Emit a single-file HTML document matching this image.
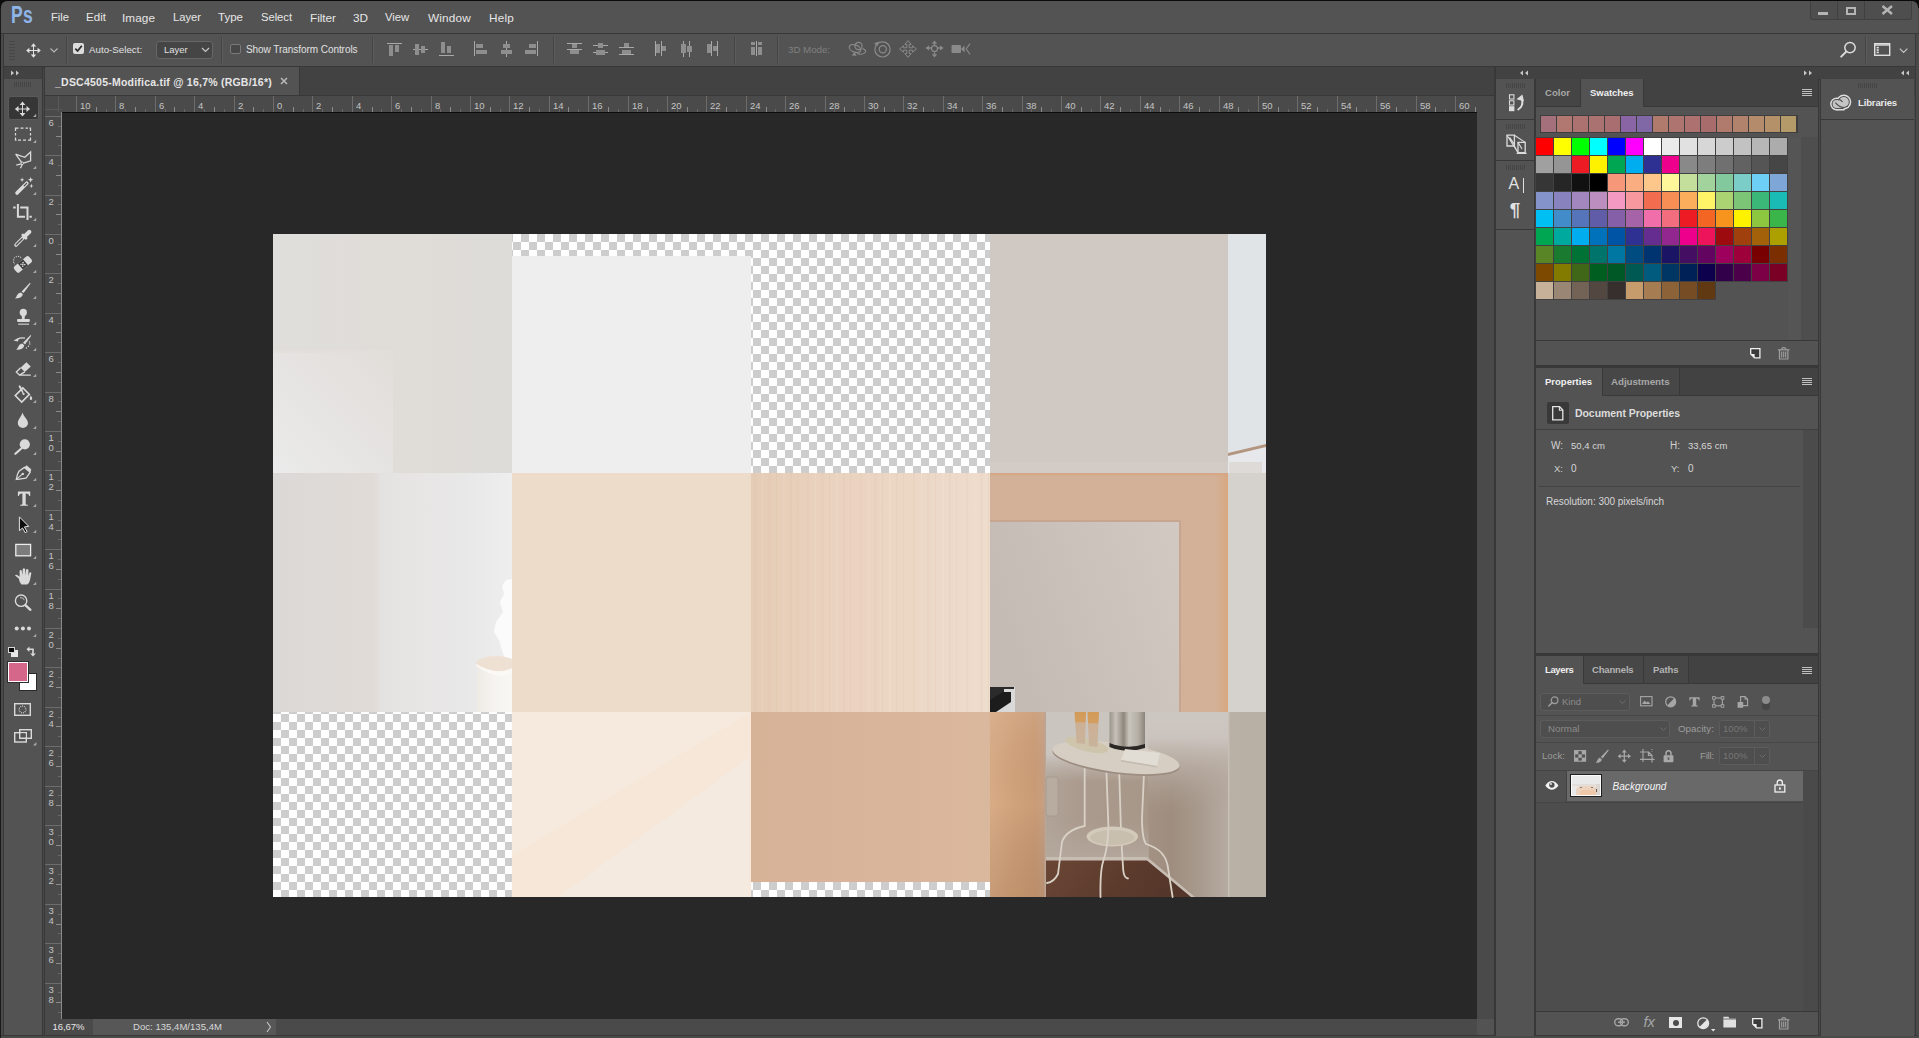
<!DOCTYPE html>
<html><head><meta charset="utf-8"><title>Photoshop</title>
<style>
html,body{margin:0;padding:0;background:#535353;}
body{width:1919px;height:1038px;position:relative;overflow:hidden;font-family:"Liberation Sans",sans-serif;}
body div,body span,body svg{position:absolute;display:block;white-space:nowrap;}
svg{overflow:visible}
</style></head><body>
<div style="left:0px;top:0px;width:1919px;height:1038px;background:#4a4a4a;"></div>
<div style="left:0px;top:0px;width:1919px;height:1px;background:#0a0a0a;"></div>
<div style="left:0px;top:0px;width:1px;height:1038px;background:#1a1a1a;"></div>
<div style="left:0px;top:0px;width:8px;height:8px;background:#0c0c0c;"></div>
<div style="left:1911px;top:0px;width:8px;height:8px;background:#0c0c0c;"></div>
<div style="left:1px;top:1px;width:1917px;height:32px;background:#535353;border-top-left-radius:6px;border-top-right-radius:6px;"></div>
<div style="left:1px;top:33px;width:1918px;height:1px;background:#383838;"></div>
<div style="left:4px;top:34px;width:1911px;height:32px;background:#535353;"></div>
<div style="left:3px;top:33px;width:1px;height:1003px;background:#383838;"></div>
<div style="left:1915px;top:33px;width:1px;height:1003px;background:#383838;"></div>
<div style="left:4px;top:66px;width:1911px;height:1px;background:#383838;"></div>
<div style="left:4px;top:67px;width:1911px;height:29px;background:#424242;"></div>
<div style="left:4px;top:79px;width:38px;height:957px;background:#535353;"></div>
<div style="left:4px;top:67px;width:38px;height:12px;background:#424242;"></div>
<div style="left:42px;top:67px;width:3px;height:969px;background:#383838;"></div>
<div style="left:43px;top:68px;width:1px;height:967px;background:#484848;"></div>
<div style="left:45px;top:67px;width:254px;height:28px;background:#535353;"></div>
<div style="left:299px;top:67px;width:1px;height:28px;background:#383838;"></div>
<div style="left:45px;top:95px;width:1449px;height:1px;background:#383838;"></div>
<div style="left:45px;top:96px;width:1449px;height:16px;background:#4a4a4a;"></div>
<div style="left:45px;top:112px;width:17px;height:907px;background:#4a4a4a;"></div>
<div style="left:62px;top:112px;width:1415px;height:1px;background:#0c0c0c;"></div>
<div style="left:61px;top:112px;width:1px;height:907px;background:#8a8a8a;"></div>
<div style="left:62px;top:113px;width:1415px;height:906px;background:#282828;"></div>
<div style="left:1477px;top:96px;width:17px;height:923px;background:#4a4a4a;"></div>
<div style="left:45px;top:1019px;width:1432px;height:16px;background:#4a4a4a;"></div>
<div style="left:1477px;top:1019px;width:17px;height:16px;background:#535353;"></div>
<div style="left:46px;top:1019px;width:47px;height:16px;background:#4a4a4a;"></div>
<div style="left:93px;top:1019px;width:183px;height:16px;background:#575757;"></div>
<div style="left:1px;top:1035px;width:1917px;height:1px;background:#383838;"></div>
<div style="left:1494px;top:67px;width:2px;height:969px;background:#383838;"></div>
<span style="left:51px;top:12.48px;font-size:11.25px;line-height:11.25px;color:#e6e6e6;letter-spacing:-0.032px;">File</span>
<span style="left:86px;top:12.27px;font-size:11.5px;line-height:11.5px;color:#e6e6e6;letter-spacing:0.046px;">Edit</span>
<span style="left:122px;top:12.05px;font-size:11.75px;line-height:11.75px;color:#e6e6e6;letter-spacing:0.068px;">Image</span>
<span style="left:173px;top:12.48px;font-size:11.25px;line-height:11.25px;color:#e6e6e6;letter-spacing:-0.029px;">Layer</span>
<span style="left:218px;top:12.27px;font-size:11.5px;line-height:11.5px;color:#e6e6e6;letter-spacing:0.017px;">Type</span>
<span style="left:261px;top:12.48px;font-size:11.25px;line-height:11.25px;color:#e6e6e6;letter-spacing:-0.045px;">Select</span>
<span style="left:310px;top:12.05px;font-size:11.75px;line-height:11.75px;color:#e6e6e6;letter-spacing:-0.019px;">Filter</span>
<span style="left:353px;top:12.05px;font-size:11.75px;line-height:11.75px;color:#e6e6e6;letter-spacing:-0.010px;">3D</span>
<span style="left:385px;top:12.48px;font-size:11.25px;line-height:11.25px;color:#e6e6e6;letter-spacing:-0.046px;">View</span>
<span style="left:428px;top:12.05px;font-size:11.75px;line-height:11.75px;color:#e6e6e6;letter-spacing:0.201px;">Window</span>
<span style="left:489px;top:12.05px;font-size:11.75px;line-height:11.75px;color:#e6e6e6;letter-spacing:0.208px;">Help</span>
<span style="left:10.5px;top:3.53px;font-size:23px;line-height:23px;color:#8fb5e8;font-weight:bold;transform:scaleX(0.76);transform-origin:0 0;letter-spacing:0.6px;">Ps</span>
<div style="left:1810px;top:1px;width:102px;height:19px;background:#4e4e4e;border:1px solid #404040;border-top:none;box-sizing:border-box;border-radius:0 0 3px 3px;"></div>
<div style="left:1837px;top:1px;width:1px;height:18px;background:#404040;"></div>
<div style="left:1864px;top:1px;width:1px;height:18px;background:#404040;"></div>
<div style="left:1818px;top:12px;width:10px;height:3px;background:#b4b4b4;"></div>
<div style="left:1846px;top:7px;width:10px;height:8px;background:none;border:2px solid #b4b4b4;box-sizing:border-box;"></div>
<svg style="left:1881px;top:5px;" width="13" height="10" viewBox="0 0 13 10"><path d="M1.5 1 L11 9 M11 1 L1.5 9" stroke="#b4b4b4" stroke-width="2.4" fill="none"/></svg>
<div style="left:9px;top:41px;width:6px;height:1px;background:#474747;"></div>
<div style="left:9px;top:44px;width:6px;height:1px;background:#474747;"></div>
<div style="left:9px;top:47px;width:6px;height:1px;background:#474747;"></div>
<div style="left:9px;top:50px;width:6px;height:1px;background:#474747;"></div>
<div style="left:9px;top:53px;width:6px;height:1px;background:#474747;"></div>
<div style="left:9px;top:56px;width:6px;height:1px;background:#474747;"></div>
<div style="left:9px;top:59px;width:6px;height:1px;background:#474747;"></div>
<div style="left:66px;top:37px;width:1px;height:26px;background:#444;"></div>
<div style="left:67px;top:37px;width:1px;height:26px;background:#5c5c5c;"></div>
<div style="left:221px;top:37px;width:1px;height:26px;background:#444;"></div>
<div style="left:222px;top:37px;width:1px;height:26px;background:#5c5c5c;"></div>
<div style="left:372px;top:37px;width:1px;height:26px;background:#444;"></div>
<div style="left:373px;top:37px;width:1px;height:26px;background:#5c5c5c;"></div>
<div style="left:553px;top:37px;width:1px;height:26px;background:#444;"></div>
<div style="left:554px;top:37px;width:1px;height:26px;background:#5c5c5c;"></div>
<div style="left:734px;top:37px;width:1px;height:26px;background:#444;"></div>
<div style="left:735px;top:37px;width:1px;height:26px;background:#5c5c5c;"></div>
<div style="left:777px;top:37px;width:1px;height:26px;background:#444;"></div>
<div style="left:778px;top:37px;width:1px;height:26px;background:#5c5c5c;"></div>
<div style="left:1865px;top:37px;width:1px;height:26px;background:#444;"></div>
<div style="left:1866px;top:37px;width:1px;height:26px;background:#5c5c5c;"></div>
<div style="left:73px;top:43px;width:11px;height:11px;background:#dcdcdc;border-radius:2px;"></div>
<svg style="left:73px;top:43px;" width="11" height="11" viewBox="0 0 11 11"><path d="M2.3 5.6 L4.6 8 L8.8 2.8" stroke="#2a2a2a" stroke-width="1.8" fill="none"/></svg>
<span style="left:89px;top:44.75px;font-size:9.75px;line-height:9.75px;color:#e0e0e0;">Auto-Select:</span>
<div style="left:156px;top:41px;width:57px;height:18px;background:#454545;border:1px solid #666;box-sizing:border-box;border-radius:3px;"></div>
<span style="left:164px;top:44.96px;font-size:9.5px;line-height:9.5px;color:#e0e0e0;letter-spacing:-0.053px;">Layer</span>
<svg style="left:201px;top:47px;" width="9" height="6" viewBox="0 0 9 6"><path d="M1 1 L4.5 4.5 L8 1" stroke="#c8c8c8" stroke-width="1.2" fill="none"/></svg>
<div style="left:230px;top:44px;width:11px;height:10px;background:#474747;border:1px solid #7a7a7a;box-sizing:border-box;border-radius:2px;"></div>
<span style="left:246px;top:44.53px;font-size:10.0px;line-height:10.0px;color:#e0e0e0;letter-spacing:-0.057px;">Show Transform Controls</span>
<span style="left:788px;top:44.75px;font-size:9.75px;line-height:9.75px;color:#808080;letter-spacing:-0.034px;">3D Mode:</span>
<span style="left:55px;top:77.11px;font-size:10.5px;line-height:10.5px;color:#e6e6e6;font-weight:bold;letter-spacing:0.229px;">_DSC4505-Modifica.tif @ 16,7% (RGB/16*)</span>
<svg style="left:280px;top:77px;" width="8" height="8" viewBox="0 0 8 8"><path d="M1 1 L7 7 M7 1 L1 7" stroke="#b8b8b8" stroke-width="1.6" fill="none"/></svg>
<span style="left:52.5px;top:1021.96px;font-size:9.5px;line-height:9.5px;color:#e6e6e6;letter-spacing:-0.037px;">16,67%</span>
<span style="left:133px;top:1021.96px;font-size:9.5px;line-height:9.5px;color:#d8d8d8;letter-spacing:0.045px;">Doc: 135,4M/135,4M</span>
<svg style="left:266px;top:1021px;" width="6" height="12" viewBox="0 0 6 12"><path d="M1 1 L4.5 6 L1 11" stroke="#c8c8c8" stroke-width="1.1" fill="none"/></svg>
<svg style="left:10px;top:69px;" width="12" height="8" viewBox="0 0 12 8"><path d="M1 1.5 L4 4 L1 6.5 Z M6 1.5 L9 4 L6 6.5 Z" fill="#c8c8c8"/></svg>
<div style="left:14px;top:82px;width:1px;height:5px;background:#454545;"></div>
<div style="left:16px;top:82px;width:1px;height:5px;background:#454545;"></div>
<div style="left:18px;top:82px;width:1px;height:5px;background:#454545;"></div>
<div style="left:20px;top:82px;width:1px;height:5px;background:#454545;"></div>
<div style="left:22px;top:82px;width:1px;height:5px;background:#454545;"></div>
<div style="left:24px;top:82px;width:1px;height:5px;background:#454545;"></div>
<div style="left:26px;top:82px;width:1px;height:5px;background:#454545;"></div>
<div style="left:28px;top:82px;width:1px;height:5px;background:#454545;"></div>
<div style="left:30px;top:82px;width:1px;height:5px;background:#454545;"></div>
<div style="left:76px;top:96px;width:1px;height:16px;background:#6c6c6c;"></div>
<span style="left:80px;top:100.96px;font-size:9.5px;line-height:9.5px;color:#c4c4c4;">10</span>
<div style="left:86px;top:109px;width:1px;height:3px;background:#686868;"></div>
<div style="left:96px;top:107px;width:1px;height:5px;background:#8a8a8a;"></div>
<div style="left:106px;top:109px;width:1px;height:3px;background:#686868;"></div>
<div style="left:115px;top:96px;width:1px;height:16px;background:#6c6c6c;"></div>
<span style="left:119px;top:100.96px;font-size:9.5px;line-height:9.5px;color:#c4c4c4;">8</span>
<div style="left:125px;top:109px;width:1px;height:3px;background:#686868;"></div>
<div style="left:135px;top:107px;width:1px;height:5px;background:#8a8a8a;"></div>
<div style="left:145px;top:109px;width:1px;height:3px;background:#686868;"></div>
<div style="left:155px;top:96px;width:1px;height:16px;background:#6c6c6c;"></div>
<span style="left:159px;top:100.96px;font-size:9.5px;line-height:9.5px;color:#c4c4c4;">6</span>
<div style="left:165px;top:109px;width:1px;height:3px;background:#686868;"></div>
<div style="left:174px;top:107px;width:1px;height:5px;background:#8a8a8a;"></div>
<div style="left:184px;top:109px;width:1px;height:3px;background:#686868;"></div>
<div style="left:194px;top:96px;width:1px;height:16px;background:#6c6c6c;"></div>
<span style="left:198px;top:100.96px;font-size:9.5px;line-height:9.5px;color:#c4c4c4;">4</span>
<div style="left:204px;top:109px;width:1px;height:3px;background:#686868;"></div>
<div style="left:214px;top:107px;width:1px;height:5px;background:#8a8a8a;"></div>
<div style="left:224px;top:109px;width:1px;height:3px;background:#686868;"></div>
<div style="left:234px;top:96px;width:1px;height:16px;background:#6c6c6c;"></div>
<span style="left:238px;top:100.96px;font-size:9.5px;line-height:9.5px;color:#c4c4c4;">2</span>
<div style="left:243px;top:109px;width:1px;height:3px;background:#686868;"></div>
<div style="left:253px;top:107px;width:1px;height:5px;background:#8a8a8a;"></div>
<div style="left:263px;top:109px;width:1px;height:3px;background:#686868;"></div>
<div style="left:273px;top:96px;width:1px;height:16px;background:#6c6c6c;"></div>
<span style="left:277px;top:100.96px;font-size:9.5px;line-height:9.5px;color:#c4c4c4;">0</span>
<div style="left:283px;top:109px;width:1px;height:3px;background:#686868;"></div>
<div style="left:293px;top:107px;width:1px;height:5px;background:#8a8a8a;"></div>
<div style="left:303px;top:109px;width:1px;height:3px;background:#686868;"></div>
<div style="left:312px;top:96px;width:1px;height:16px;background:#6c6c6c;"></div>
<span style="left:316px;top:100.96px;font-size:9.5px;line-height:9.5px;color:#c4c4c4;">2</span>
<div style="left:322px;top:109px;width:1px;height:3px;background:#686868;"></div>
<div style="left:332px;top:107px;width:1px;height:5px;background:#8a8a8a;"></div>
<div style="left:342px;top:109px;width:1px;height:3px;background:#686868;"></div>
<div style="left:352px;top:96px;width:1px;height:16px;background:#6c6c6c;"></div>
<span style="left:356px;top:100.96px;font-size:9.5px;line-height:9.5px;color:#c4c4c4;">4</span>
<div style="left:362px;top:109px;width:1px;height:3px;background:#686868;"></div>
<div style="left:372px;top:107px;width:1px;height:5px;background:#8a8a8a;"></div>
<div style="left:381px;top:109px;width:1px;height:3px;background:#686868;"></div>
<div style="left:391px;top:96px;width:1px;height:16px;background:#6c6c6c;"></div>
<span style="left:395px;top:100.96px;font-size:9.5px;line-height:9.5px;color:#c4c4c4;">6</span>
<div style="left:401px;top:109px;width:1px;height:3px;background:#686868;"></div>
<div style="left:411px;top:107px;width:1px;height:5px;background:#8a8a8a;"></div>
<div style="left:421px;top:109px;width:1px;height:3px;background:#686868;"></div>
<div style="left:431px;top:96px;width:1px;height:16px;background:#6c6c6c;"></div>
<span style="left:435px;top:100.96px;font-size:9.5px;line-height:9.5px;color:#c4c4c4;">8</span>
<div style="left:440px;top:109px;width:1px;height:3px;background:#686868;"></div>
<div style="left:450px;top:107px;width:1px;height:5px;background:#8a8a8a;"></div>
<div style="left:460px;top:109px;width:1px;height:3px;background:#686868;"></div>
<div style="left:470px;top:96px;width:1px;height:16px;background:#6c6c6c;"></div>
<span style="left:474px;top:100.96px;font-size:9.5px;line-height:9.5px;color:#c4c4c4;">10</span>
<div style="left:480px;top:109px;width:1px;height:3px;background:#686868;"></div>
<div style="left:490px;top:107px;width:1px;height:5px;background:#8a8a8a;"></div>
<div style="left:500px;top:109px;width:1px;height:3px;background:#686868;"></div>
<div style="left:509px;top:96px;width:1px;height:16px;background:#6c6c6c;"></div>
<span style="left:513px;top:100.96px;font-size:9.5px;line-height:9.5px;color:#c4c4c4;">12</span>
<div style="left:519px;top:109px;width:1px;height:3px;background:#686868;"></div>
<div style="left:529px;top:107px;width:1px;height:5px;background:#8a8a8a;"></div>
<div style="left:539px;top:109px;width:1px;height:3px;background:#686868;"></div>
<div style="left:549px;top:96px;width:1px;height:16px;background:#6c6c6c;"></div>
<span style="left:553px;top:100.96px;font-size:9.5px;line-height:9.5px;color:#c4c4c4;">14</span>
<div style="left:559px;top:109px;width:1px;height:3px;background:#686868;"></div>
<div style="left:568px;top:107px;width:1px;height:5px;background:#8a8a8a;"></div>
<div style="left:578px;top:109px;width:1px;height:3px;background:#686868;"></div>
<div style="left:588px;top:96px;width:1px;height:16px;background:#6c6c6c;"></div>
<span style="left:592px;top:100.96px;font-size:9.5px;line-height:9.5px;color:#c4c4c4;">16</span>
<div style="left:598px;top:109px;width:1px;height:3px;background:#686868;"></div>
<div style="left:608px;top:107px;width:1px;height:5px;background:#8a8a8a;"></div>
<div style="left:618px;top:109px;width:1px;height:3px;background:#686868;"></div>
<div style="left:628px;top:96px;width:1px;height:16px;background:#6c6c6c;"></div>
<span style="left:632px;top:100.96px;font-size:9.5px;line-height:9.5px;color:#c4c4c4;">18</span>
<div style="left:637px;top:109px;width:1px;height:3px;background:#686868;"></div>
<div style="left:647px;top:107px;width:1px;height:5px;background:#8a8a8a;"></div>
<div style="left:657px;top:109px;width:1px;height:3px;background:#686868;"></div>
<div style="left:667px;top:96px;width:1px;height:16px;background:#6c6c6c;"></div>
<span style="left:671px;top:100.96px;font-size:9.5px;line-height:9.5px;color:#c4c4c4;">20</span>
<div style="left:677px;top:109px;width:1px;height:3px;background:#686868;"></div>
<div style="left:687px;top:107px;width:1px;height:5px;background:#8a8a8a;"></div>
<div style="left:697px;top:109px;width:1px;height:3px;background:#686868;"></div>
<div style="left:706px;top:96px;width:1px;height:16px;background:#6c6c6c;"></div>
<span style="left:710px;top:100.96px;font-size:9.5px;line-height:9.5px;color:#c4c4c4;">22</span>
<div style="left:716px;top:109px;width:1px;height:3px;background:#686868;"></div>
<div style="left:726px;top:107px;width:1px;height:5px;background:#8a8a8a;"></div>
<div style="left:736px;top:109px;width:1px;height:3px;background:#686868;"></div>
<div style="left:746px;top:96px;width:1px;height:16px;background:#6c6c6c;"></div>
<span style="left:750px;top:100.96px;font-size:9.5px;line-height:9.5px;color:#c4c4c4;">24</span>
<div style="left:756px;top:109px;width:1px;height:3px;background:#686868;"></div>
<div style="left:766px;top:107px;width:1px;height:5px;background:#8a8a8a;"></div>
<div style="left:775px;top:109px;width:1px;height:3px;background:#686868;"></div>
<div style="left:785px;top:96px;width:1px;height:16px;background:#6c6c6c;"></div>
<span style="left:789px;top:100.96px;font-size:9.5px;line-height:9.5px;color:#c4c4c4;">26</span>
<div style="left:795px;top:109px;width:1px;height:3px;background:#686868;"></div>
<div style="left:805px;top:107px;width:1px;height:5px;background:#8a8a8a;"></div>
<div style="left:815px;top:109px;width:1px;height:3px;background:#686868;"></div>
<div style="left:825px;top:96px;width:1px;height:16px;background:#6c6c6c;"></div>
<span style="left:829px;top:100.96px;font-size:9.5px;line-height:9.5px;color:#c4c4c4;">28</span>
<div style="left:834px;top:109px;width:1px;height:3px;background:#686868;"></div>
<div style="left:844px;top:107px;width:1px;height:5px;background:#8a8a8a;"></div>
<div style="left:854px;top:109px;width:1px;height:3px;background:#686868;"></div>
<div style="left:864px;top:96px;width:1px;height:16px;background:#6c6c6c;"></div>
<span style="left:868px;top:100.96px;font-size:9.5px;line-height:9.5px;color:#c4c4c4;">30</span>
<div style="left:874px;top:109px;width:1px;height:3px;background:#686868;"></div>
<div style="left:884px;top:107px;width:1px;height:5px;background:#8a8a8a;"></div>
<div style="left:894px;top:109px;width:1px;height:3px;background:#686868;"></div>
<div style="left:903px;top:96px;width:1px;height:16px;background:#6c6c6c;"></div>
<span style="left:907px;top:100.96px;font-size:9.5px;line-height:9.5px;color:#c4c4c4;">32</span>
<div style="left:913px;top:109px;width:1px;height:3px;background:#686868;"></div>
<div style="left:923px;top:107px;width:1px;height:5px;background:#8a8a8a;"></div>
<div style="left:933px;top:109px;width:1px;height:3px;background:#686868;"></div>
<div style="left:943px;top:96px;width:1px;height:16px;background:#6c6c6c;"></div>
<span style="left:947px;top:100.96px;font-size:9.5px;line-height:9.5px;color:#c4c4c4;">34</span>
<div style="left:953px;top:109px;width:1px;height:3px;background:#686868;"></div>
<div style="left:962px;top:107px;width:1px;height:5px;background:#8a8a8a;"></div>
<div style="left:972px;top:109px;width:1px;height:3px;background:#686868;"></div>
<div style="left:982px;top:96px;width:1px;height:16px;background:#6c6c6c;"></div>
<span style="left:986px;top:100.96px;font-size:9.5px;line-height:9.5px;color:#c4c4c4;">36</span>
<div style="left:992px;top:109px;width:1px;height:3px;background:#686868;"></div>
<div style="left:1002px;top:107px;width:1px;height:5px;background:#8a8a8a;"></div>
<div style="left:1012px;top:109px;width:1px;height:3px;background:#686868;"></div>
<div style="left:1022px;top:96px;width:1px;height:16px;background:#6c6c6c;"></div>
<span style="left:1026px;top:100.96px;font-size:9.5px;line-height:9.5px;color:#c4c4c4;">38</span>
<div style="left:1031px;top:109px;width:1px;height:3px;background:#686868;"></div>
<div style="left:1041px;top:107px;width:1px;height:5px;background:#8a8a8a;"></div>
<div style="left:1051px;top:109px;width:1px;height:3px;background:#686868;"></div>
<div style="left:1061px;top:96px;width:1px;height:16px;background:#6c6c6c;"></div>
<span style="left:1065px;top:100.96px;font-size:9.5px;line-height:9.5px;color:#c4c4c4;">40</span>
<div style="left:1071px;top:109px;width:1px;height:3px;background:#686868;"></div>
<div style="left:1081px;top:107px;width:1px;height:5px;background:#8a8a8a;"></div>
<div style="left:1091px;top:109px;width:1px;height:3px;background:#686868;"></div>
<div style="left:1100px;top:96px;width:1px;height:16px;background:#6c6c6c;"></div>
<span style="left:1104px;top:100.96px;font-size:9.5px;line-height:9.5px;color:#c4c4c4;">42</span>
<div style="left:1110px;top:109px;width:1px;height:3px;background:#686868;"></div>
<div style="left:1120px;top:107px;width:1px;height:5px;background:#8a8a8a;"></div>
<div style="left:1130px;top:109px;width:1px;height:3px;background:#686868;"></div>
<div style="left:1140px;top:96px;width:1px;height:16px;background:#6c6c6c;"></div>
<span style="left:1144px;top:100.96px;font-size:9.5px;line-height:9.5px;color:#c4c4c4;">44</span>
<div style="left:1150px;top:109px;width:1px;height:3px;background:#686868;"></div>
<div style="left:1160px;top:107px;width:1px;height:5px;background:#8a8a8a;"></div>
<div style="left:1169px;top:109px;width:1px;height:3px;background:#686868;"></div>
<div style="left:1179px;top:96px;width:1px;height:16px;background:#6c6c6c;"></div>
<span style="left:1183px;top:100.96px;font-size:9.5px;line-height:9.5px;color:#c4c4c4;">46</span>
<div style="left:1189px;top:109px;width:1px;height:3px;background:#686868;"></div>
<div style="left:1199px;top:107px;width:1px;height:5px;background:#8a8a8a;"></div>
<div style="left:1209px;top:109px;width:1px;height:3px;background:#686868;"></div>
<div style="left:1219px;top:96px;width:1px;height:16px;background:#6c6c6c;"></div>
<span style="left:1223px;top:100.96px;font-size:9.5px;line-height:9.5px;color:#c4c4c4;">48</span>
<div style="left:1228px;top:109px;width:1px;height:3px;background:#686868;"></div>
<div style="left:1238px;top:107px;width:1px;height:5px;background:#8a8a8a;"></div>
<div style="left:1248px;top:109px;width:1px;height:3px;background:#686868;"></div>
<div style="left:1258px;top:96px;width:1px;height:16px;background:#6c6c6c;"></div>
<span style="left:1262px;top:100.96px;font-size:9.5px;line-height:9.5px;color:#c4c4c4;">50</span>
<div style="left:1268px;top:109px;width:1px;height:3px;background:#686868;"></div>
<div style="left:1278px;top:107px;width:1px;height:5px;background:#8a8a8a;"></div>
<div style="left:1288px;top:109px;width:1px;height:3px;background:#686868;"></div>
<div style="left:1297px;top:96px;width:1px;height:16px;background:#6c6c6c;"></div>
<span style="left:1301px;top:100.96px;font-size:9.5px;line-height:9.5px;color:#c4c4c4;">52</span>
<div style="left:1307px;top:109px;width:1px;height:3px;background:#686868;"></div>
<div style="left:1317px;top:107px;width:1px;height:5px;background:#8a8a8a;"></div>
<div style="left:1327px;top:109px;width:1px;height:3px;background:#686868;"></div>
<div style="left:1337px;top:96px;width:1px;height:16px;background:#6c6c6c;"></div>
<span style="left:1341px;top:100.96px;font-size:9.5px;line-height:9.5px;color:#c4c4c4;">54</span>
<div style="left:1347px;top:109px;width:1px;height:3px;background:#686868;"></div>
<div style="left:1356px;top:107px;width:1px;height:5px;background:#8a8a8a;"></div>
<div style="left:1366px;top:109px;width:1px;height:3px;background:#686868;"></div>
<div style="left:1376px;top:96px;width:1px;height:16px;background:#6c6c6c;"></div>
<span style="left:1380px;top:100.96px;font-size:9.5px;line-height:9.5px;color:#c4c4c4;">56</span>
<div style="left:1386px;top:109px;width:1px;height:3px;background:#686868;"></div>
<div style="left:1396px;top:107px;width:1px;height:5px;background:#8a8a8a;"></div>
<div style="left:1406px;top:109px;width:1px;height:3px;background:#686868;"></div>
<div style="left:1416px;top:96px;width:1px;height:16px;background:#6c6c6c;"></div>
<span style="left:1420px;top:100.96px;font-size:9.5px;line-height:9.5px;color:#c4c4c4;">58</span>
<div style="left:1425px;top:109px;width:1px;height:3px;background:#686868;"></div>
<div style="left:1435px;top:107px;width:1px;height:5px;background:#8a8a8a;"></div>
<div style="left:1445px;top:109px;width:1px;height:3px;background:#686868;"></div>
<div style="left:1455px;top:96px;width:1px;height:16px;background:#6c6c6c;"></div>
<span style="left:1459px;top:100.96px;font-size:9.5px;line-height:9.5px;color:#c4c4c4;">60</span>
<div style="left:1465px;top:109px;width:1px;height:3px;background:#686868;"></div>
<div style="left:1475px;top:107px;width:1px;height:5px;background:#8a8a8a;"></div>
<div style="left:45px;top:116px;width:16px;height:1px;background:#6c6c6c;"></div>
<span style="left:48.5px;top:118.46px;font-size:9.5px;line-height:9.5px;color:#c4c4c4;">6</span>
<div style="left:58px;top:126px;width:3px;height:1px;background:#686868;"></div>
<div style="left:56px;top:136px;width:5px;height:1px;background:#8a8a8a;"></div>
<div style="left:58px;top:145px;width:3px;height:1px;background:#686868;"></div>
<div style="left:45px;top:155px;width:16px;height:1px;background:#6c6c6c;"></div>
<span style="left:48.5px;top:157.46px;font-size:9.5px;line-height:9.5px;color:#c4c4c4;">4</span>
<div style="left:58px;top:165px;width:3px;height:1px;background:#686868;"></div>
<div style="left:56px;top:175px;width:5px;height:1px;background:#8a8a8a;"></div>
<div style="left:58px;top:185px;width:3px;height:1px;background:#686868;"></div>
<div style="left:45px;top:195px;width:16px;height:1px;background:#6c6c6c;"></div>
<span style="left:48.5px;top:197.46px;font-size:9.5px;line-height:9.5px;color:#c4c4c4;">2</span>
<div style="left:58px;top:204px;width:3px;height:1px;background:#686868;"></div>
<div style="left:56px;top:214px;width:5px;height:1px;background:#8a8a8a;"></div>
<div style="left:58px;top:224px;width:3px;height:1px;background:#686868;"></div>
<div style="left:45px;top:234px;width:16px;height:1px;background:#6c6c6c;"></div>
<span style="left:48.5px;top:236.46px;font-size:9.5px;line-height:9.5px;color:#c4c4c4;">0</span>
<div style="left:58px;top:244px;width:3px;height:1px;background:#686868;"></div>
<div style="left:56px;top:254px;width:5px;height:1px;background:#8a8a8a;"></div>
<div style="left:58px;top:264px;width:3px;height:1px;background:#686868;"></div>
<div style="left:45px;top:273px;width:16px;height:1px;background:#6c6c6c;"></div>
<span style="left:48.5px;top:275.46px;font-size:9.5px;line-height:9.5px;color:#c4c4c4;">2</span>
<div style="left:58px;top:283px;width:3px;height:1px;background:#686868;"></div>
<div style="left:56px;top:293px;width:5px;height:1px;background:#8a8a8a;"></div>
<div style="left:58px;top:303px;width:3px;height:1px;background:#686868;"></div>
<div style="left:45px;top:313px;width:16px;height:1px;background:#6c6c6c;"></div>
<span style="left:48.5px;top:315.46px;font-size:9.5px;line-height:9.5px;color:#c4c4c4;">4</span>
<div style="left:58px;top:323px;width:3px;height:1px;background:#686868;"></div>
<div style="left:56px;top:332px;width:5px;height:1px;background:#8a8a8a;"></div>
<div style="left:58px;top:342px;width:3px;height:1px;background:#686868;"></div>
<div style="left:45px;top:352px;width:16px;height:1px;background:#6c6c6c;"></div>
<span style="left:48.5px;top:354.46px;font-size:9.5px;line-height:9.5px;color:#c4c4c4;">6</span>
<div style="left:58px;top:362px;width:3px;height:1px;background:#686868;"></div>
<div style="left:56px;top:372px;width:5px;height:1px;background:#8a8a8a;"></div>
<div style="left:58px;top:382px;width:3px;height:1px;background:#686868;"></div>
<div style="left:45px;top:392px;width:16px;height:1px;background:#6c6c6c;"></div>
<span style="left:48.5px;top:394.46px;font-size:9.5px;line-height:9.5px;color:#c4c4c4;">8</span>
<div style="left:58px;top:401px;width:3px;height:1px;background:#686868;"></div>
<div style="left:56px;top:411px;width:5px;height:1px;background:#8a8a8a;"></div>
<div style="left:58px;top:421px;width:3px;height:1px;background:#686868;"></div>
<div style="left:45px;top:431px;width:16px;height:1px;background:#6c6c6c;"></div>
<span style="left:48.5px;top:433.46px;font-size:9.5px;line-height:9.5px;color:#c4c4c4;">1</span>
<span style="left:48.5px;top:443.46px;font-size:9.5px;line-height:9.5px;color:#c4c4c4;">0</span>
<div style="left:58px;top:441px;width:3px;height:1px;background:#686868;"></div>
<div style="left:56px;top:451px;width:5px;height:1px;background:#8a8a8a;"></div>
<div style="left:58px;top:461px;width:3px;height:1px;background:#686868;"></div>
<div style="left:45px;top:470px;width:16px;height:1px;background:#6c6c6c;"></div>
<span style="left:48.5px;top:472.46px;font-size:9.5px;line-height:9.5px;color:#c4c4c4;">1</span>
<span style="left:48.5px;top:482.46px;font-size:9.5px;line-height:9.5px;color:#c4c4c4;">2</span>
<div style="left:58px;top:480px;width:3px;height:1px;background:#686868;"></div>
<div style="left:56px;top:490px;width:5px;height:1px;background:#8a8a8a;"></div>
<div style="left:58px;top:500px;width:3px;height:1px;background:#686868;"></div>
<div style="left:45px;top:510px;width:16px;height:1px;background:#6c6c6c;"></div>
<span style="left:48.5px;top:512.46px;font-size:9.5px;line-height:9.5px;color:#c4c4c4;">1</span>
<span style="left:48.5px;top:522.46px;font-size:9.5px;line-height:9.5px;color:#c4c4c4;">4</span>
<div style="left:58px;top:520px;width:3px;height:1px;background:#686868;"></div>
<div style="left:56px;top:530px;width:5px;height:1px;background:#8a8a8a;"></div>
<div style="left:58px;top:539px;width:3px;height:1px;background:#686868;"></div>
<div style="left:45px;top:549px;width:16px;height:1px;background:#6c6c6c;"></div>
<span style="left:48.5px;top:551.46px;font-size:9.5px;line-height:9.5px;color:#c4c4c4;">1</span>
<span style="left:48.5px;top:561.46px;font-size:9.5px;line-height:9.5px;color:#c4c4c4;">6</span>
<div style="left:58px;top:559px;width:3px;height:1px;background:#686868;"></div>
<div style="left:56px;top:569px;width:5px;height:1px;background:#8a8a8a;"></div>
<div style="left:58px;top:579px;width:3px;height:1px;background:#686868;"></div>
<div style="left:45px;top:589px;width:16px;height:1px;background:#6c6c6c;"></div>
<span style="left:48.5px;top:591.46px;font-size:9.5px;line-height:9.5px;color:#c4c4c4;">1</span>
<span style="left:48.5px;top:601.46px;font-size:9.5px;line-height:9.5px;color:#c4c4c4;">8</span>
<div style="left:58px;top:598px;width:3px;height:1px;background:#686868;"></div>
<div style="left:56px;top:608px;width:5px;height:1px;background:#8a8a8a;"></div>
<div style="left:58px;top:618px;width:3px;height:1px;background:#686868;"></div>
<div style="left:45px;top:628px;width:16px;height:1px;background:#6c6c6c;"></div>
<span style="left:48.5px;top:630.46px;font-size:9.5px;line-height:9.5px;color:#c4c4c4;">2</span>
<span style="left:48.5px;top:640.46px;font-size:9.5px;line-height:9.5px;color:#c4c4c4;">0</span>
<div style="left:58px;top:638px;width:3px;height:1px;background:#686868;"></div>
<div style="left:56px;top:648px;width:5px;height:1px;background:#8a8a8a;"></div>
<div style="left:58px;top:658px;width:3px;height:1px;background:#686868;"></div>
<div style="left:45px;top:667px;width:16px;height:1px;background:#6c6c6c;"></div>
<span style="left:48.5px;top:669.46px;font-size:9.5px;line-height:9.5px;color:#c4c4c4;">2</span>
<span style="left:48.5px;top:679.46px;font-size:9.5px;line-height:9.5px;color:#c4c4c4;">2</span>
<div style="left:58px;top:677px;width:3px;height:1px;background:#686868;"></div>
<div style="left:56px;top:687px;width:5px;height:1px;background:#8a8a8a;"></div>
<div style="left:58px;top:697px;width:3px;height:1px;background:#686868;"></div>
<div style="left:45px;top:707px;width:16px;height:1px;background:#6c6c6c;"></div>
<span style="left:48.5px;top:709.46px;font-size:9.5px;line-height:9.5px;color:#c4c4c4;">2</span>
<span style="left:48.5px;top:719.46px;font-size:9.5px;line-height:9.5px;color:#c4c4c4;">4</span>
<div style="left:58px;top:717px;width:3px;height:1px;background:#686868;"></div>
<div style="left:56px;top:726px;width:5px;height:1px;background:#8a8a8a;"></div>
<div style="left:58px;top:736px;width:3px;height:1px;background:#686868;"></div>
<div style="left:45px;top:746px;width:16px;height:1px;background:#6c6c6c;"></div>
<span style="left:48.5px;top:748.46px;font-size:9.5px;line-height:9.5px;color:#c4c4c4;">2</span>
<span style="left:48.5px;top:758.46px;font-size:9.5px;line-height:9.5px;color:#c4c4c4;">6</span>
<div style="left:58px;top:756px;width:3px;height:1px;background:#686868;"></div>
<div style="left:56px;top:766px;width:5px;height:1px;background:#8a8a8a;"></div>
<div style="left:58px;top:776px;width:3px;height:1px;background:#686868;"></div>
<div style="left:45px;top:786px;width:16px;height:1px;background:#6c6c6c;"></div>
<span style="left:48.5px;top:788.46px;font-size:9.5px;line-height:9.5px;color:#c4c4c4;">2</span>
<span style="left:48.5px;top:798.46px;font-size:9.5px;line-height:9.5px;color:#c4c4c4;">8</span>
<div style="left:58px;top:795px;width:3px;height:1px;background:#686868;"></div>
<div style="left:56px;top:805px;width:5px;height:1px;background:#8a8a8a;"></div>
<div style="left:58px;top:815px;width:3px;height:1px;background:#686868;"></div>
<div style="left:45px;top:825px;width:16px;height:1px;background:#6c6c6c;"></div>
<span style="left:48.5px;top:827.46px;font-size:9.5px;line-height:9.5px;color:#c4c4c4;">3</span>
<span style="left:48.5px;top:837.46px;font-size:9.5px;line-height:9.5px;color:#c4c4c4;">0</span>
<div style="left:58px;top:835px;width:3px;height:1px;background:#686868;"></div>
<div style="left:56px;top:845px;width:5px;height:1px;background:#8a8a8a;"></div>
<div style="left:58px;top:855px;width:3px;height:1px;background:#686868;"></div>
<div style="left:45px;top:864px;width:16px;height:1px;background:#6c6c6c;"></div>
<span style="left:48.5px;top:866.46px;font-size:9.5px;line-height:9.5px;color:#c4c4c4;">3</span>
<span style="left:48.5px;top:876.46px;font-size:9.5px;line-height:9.5px;color:#c4c4c4;">2</span>
<div style="left:58px;top:874px;width:3px;height:1px;background:#686868;"></div>
<div style="left:56px;top:884px;width:5px;height:1px;background:#8a8a8a;"></div>
<div style="left:58px;top:894px;width:3px;height:1px;background:#686868;"></div>
<div style="left:45px;top:904px;width:16px;height:1px;background:#6c6c6c;"></div>
<span style="left:48.5px;top:906.46px;font-size:9.5px;line-height:9.5px;color:#c4c4c4;">3</span>
<span style="left:48.5px;top:916.46px;font-size:9.5px;line-height:9.5px;color:#c4c4c4;">4</span>
<div style="left:58px;top:914px;width:3px;height:1px;background:#686868;"></div>
<div style="left:56px;top:924px;width:5px;height:1px;background:#8a8a8a;"></div>
<div style="left:58px;top:933px;width:3px;height:1px;background:#686868;"></div>
<div style="left:45px;top:943px;width:16px;height:1px;background:#6c6c6c;"></div>
<span style="left:48.5px;top:945.46px;font-size:9.5px;line-height:9.5px;color:#c4c4c4;">3</span>
<span style="left:48.5px;top:955.46px;font-size:9.5px;line-height:9.5px;color:#c4c4c4;">6</span>
<div style="left:58px;top:953px;width:3px;height:1px;background:#686868;"></div>
<div style="left:56px;top:963px;width:5px;height:1px;background:#8a8a8a;"></div>
<div style="left:58px;top:973px;width:3px;height:1px;background:#686868;"></div>
<div style="left:45px;top:983px;width:16px;height:1px;background:#6c6c6c;"></div>
<span style="left:48.5px;top:985.46px;font-size:9.5px;line-height:9.5px;color:#c4c4c4;">3</span>
<span style="left:48.5px;top:995.46px;font-size:9.5px;line-height:9.5px;color:#c4c4c4;">8</span>
<div style="left:58px;top:992px;width:3px;height:1px;background:#686868;"></div>
<div style="left:56px;top:1002px;width:5px;height:1px;background:#8a8a8a;"></div>
<div style="left:58px;top:1012px;width:3px;height:1px;background:#686868;"></div>
<div style="left:45px;top:96px;width:17px;height:16px;background:#4a4a4a;"></div>
<div style="left:58px;top:96px;width:1px;height:16px;background:#585858;"></div>
<div style="left:45px;top:109px;width:17px;height:1px;background:#585858;"></div>
<svg style="left:273px;top:234px" width="993" height="663" viewBox="273 234 993 663"><defs>
<pattern id="chk" x="273" y="234" width="16" height="16" patternUnits="userSpaceOnUse"><rect width="16" height="16" fill="#fff"/><rect x="8" width="8" height="8" fill="#cdcdcd"/><rect y="8" width="8" height="8" fill="#cdcdcd"/></pattern>
<linearGradient id="g11" x1="0" y1="0" x2="1" y2="0"><stop offset="0" stop-color="#dfdedb"/><stop offset="0.55" stop-color="#e0dcd8"/><stop offset="1" stop-color="#dddcd8"/></linearGradient>
<linearGradient id="g11b" x1="1" y1="0" x2="0" y2="1"><stop offset="0" stop-color="#e1ddd9"/><stop offset="1" stop-color="#ebebeb"/></linearGradient>
<linearGradient id="g21" x1="0" y1="0" x2="1" y2="0"><stop offset="0" stop-color="#dbd9d6"/><stop offset="0.42" stop-color="#e1dbd7"/><stop offset="0.46" stop-color="#e5e3e2"/><stop offset="0.8" stop-color="#e9e8e8"/><stop offset="1" stop-color="#eeeeee"/></linearGradient>
<linearGradient id="g23" x1="0" y1="0" x2="1" y2="0"><stop offset="0" stop-color="#e5ccb6"/><stop offset="0.5" stop-color="#ebd5c2"/><stop offset="1" stop-color="#eedccd"/></linearGradient>
<pattern id="grain" x="751" y="473" width="53" height="239" patternUnits="userSpaceOnUse"><rect x="3" width="2" height="239" fill="#d9b79c" opacity=".13"/><rect x="11" width="1" height="239" fill="#fff" opacity=".10"/><rect x="17" width="3" height="239" fill="#d9b79c" opacity=".10"/><rect x="25" width="1" height="239" fill="#d2aa8c" opacity=".14"/><rect x="32" width="2" height="239" fill="#fff" opacity=".09"/><rect x="39" width="2" height="239" fill="#d9b79c" opacity=".12"/><rect x="46" width="1" height="239" fill="#d2aa8c" opacity=".10"/></pattern>
<linearGradient id="g24t" x1="0" y1="0" x2="0" y2="1"><stop offset="0" stop-color="#d6a684"/><stop offset="1" stop-color="#d6a684" stop-opacity="0"/></linearGradient>
<linearGradient id="g24r" x1="0" y1="0" x2="1" y2="0"><stop offset="0" stop-color="#d2b097" stop-opacity="0"/><stop offset="0.93" stop-color="#d4b097" stop-opacity="0"/><stop offset="1" stop-color="#daa67d"/></linearGradient>
<linearGradient id="g24i" x1="0" y1="0.35" x2="1" y2="0"><stop offset="0" stop-color="#c4bbb4"/><stop offset="0.5" stop-color="#cac2bb"/><stop offset="1" stop-color="#d1c9c2"/></linearGradient>
<linearGradient id="g32" x1="0" y1="1" x2="0.62" y2="0" gradientUnits="objectBoundingBox"><stop offset="0" stop-color="#f5e6d8"/><stop offset="1" stop-color="#f6e7da"/></linearGradient>
<linearGradient id="g33" x1="0" y1="0" x2="1" y2="0"><stop offset="0" stop-color="#d6b397"/><stop offset="0.4" stop-color="#d8b59a"/><stop offset="1" stop-color="#dab89d"/></linearGradient>
<linearGradient id="gcol" x1="0" y1="0" x2="1" y2="0"><stop offset="0" stop-color="#d8ac86"/><stop offset="0.4" stop-color="#d1a37c"/><stop offset="0.8" stop-color="#cb9c76"/><stop offset="0.95" stop-color="#c79f82"/><stop offset="1" stop-color="#bf9a82"/></linearGradient><linearGradient id="gcolv" x1="0" y1="0" x2="0" y2="1"><stop offset="0" stop-color="#ffffff" stop-opacity=".06"/><stop offset="0.5" stop-color="#000" stop-opacity="0"/><stop offset="1" stop-color="#5a3010" stop-opacity=".13"/></linearGradient>
<linearGradient id="gwall" x1="0" y1="0" x2="1" y2="0"><stop offset="0" stop-color="#b0a498"/><stop offset="0.3" stop-color="#ab9b8e"/><stop offset="1" stop-color="#a79789"/></linearGradient><linearGradient id="gwallr" x1="0" y1="0" x2="1" y2="0"><stop offset="0" stop-color="#a39284"/><stop offset="0.3" stop-color="#9f8e80"/><stop offset="0.65" stop-color="#a89a8d"/><stop offset="1" stop-color="#b7aca2"/></linearGradient><linearGradient id="gwtop" x1="0" y1="0" x2="0" y2="1"><stop offset="0" stop-color="#cbc5c0"/><stop offset="0.6" stop-color="#cbc5c0"/><stop offset="1" stop-color="#c2b9b1" stop-opacity="0"/></linearGradient><linearGradient id="gwtopr" x1="0" y1="0" x2="0" y2="1"><stop offset="0" stop-color="#cdc7c2"/><stop offset="0.25" stop-color="#cbc4be"/><stop offset="0.5" stop-color="#bcb1a8" stop-opacity=".85"/><stop offset="1" stop-color="#aa9c90" stop-opacity="0"/></linearGradient><linearGradient id="gfloor" x1="0" y1="0" x2="1" y2="0.2"><stop offset="0" stop-color="#6b4636"/><stop offset="0.6" stop-color="#5c3b2d"/><stop offset="1" stop-color="#54362a"/></linearGradient><linearGradient id="gwlow" x1="0" y1="0" x2="0" y2="1"><stop offset="0" stop-color="#b4a79c" stop-opacity="0"/><stop offset="1" stop-color="#b5a99e" stop-opacity=".8"/></linearGradient>
<linearGradient id="g35" x1="0" y1="0" x2="1" y2="0"><stop offset="0" stop-color="#b9b0a6"/><stop offset="1" stop-color="#b9b0a5"/></linearGradient>
<linearGradient id="gth" x1="0" y1="0" x2="1" y2="0"><stop offset="0" stop-color="#9a948b"/><stop offset="0.18" stop-color="#c6c1b9"/><stop offset="0.4" stop-color="#8e877e"/><stop offset="0.55" stop-color="#c9c4bc"/><stop offset="0.8" stop-color="#b5afa6"/><stop offset="1" stop-color="#8c857c"/></linearGradient>
<linearGradient id="gcup" x1="0" y1="0" x2="0" y2="1"><stop offset="0" stop-color="#d39b58"/><stop offset="0.3" stop-color="#d39e60"/><stop offset="0.34" stop-color="#ccb095"/><stop offset="1" stop-color="#c9b39c"/></linearGradient>
<linearGradient id="gcandle" x1="0" y1="0" x2="1" y2="0"><stop offset="0" stop-color="#eeebe6"/><stop offset="0.5" stop-color="#f6f4f0"/><stop offset="1" stop-color="#f8f7f4"/></linearGradient>
</defs><rect x="273" y="234" width="993" height="663" fill="url(#chk)"/><rect x="273" y="234" width="239" height="239" fill="url(#g11)"/><rect x="273" y="352" width="120" height="121" fill="url(#g11b)"/><rect x="273" y="350" width="120" height="3" fill="#e3dfdb" opacity=".8"/><rect x="512" y="256" width="239" height="217" fill="#eeeeee"/><rect x="990" y="234" width="238" height="239" fill="#d0c8c2"/><rect x="990" y="462" width="238" height="11" fill="#d3ccc6"/><rect x="1228" y="234" width="38" height="239" fill="#e1e4e7"/><polygon points="1228,456 1266,447 1266,473 1228,473" fill="#e7e8eb"/><polygon points="1228,453 1266,444 1266,447 1228,456" fill="#b39580"/><rect x="1229" y="462" width="33" height="11" fill="#dddad8"/><rect x="273" y="473" width="239" height="239" fill="url(#g21)"/><path d="M512 579 L506 580 L502 586 L504 594 L500 602 L503 612 L496 622 L494 632 L499 640 L502 650 L506 662 L512 664 Z" fill="#fbfbfb"/><rect x="477" y="664" width="35" height="48" fill="url(#gcandle)"/><ellipse cx="496" cy="664" rx="20" ry="8" fill="#efe0d4"/><path d="M476 666 Q496 680 512 674 L512 668 Q496 676 476 664 Z" fill="#faf9f6"/><rect x="512" y="473" width="239" height="239" fill="#eedccb"/><rect x="751" y="473" width="239" height="239" fill="url(#g23)"/><rect x="751" y="473" width="239" height="239" fill="url(#grain)"/><rect x="990" y="473" width="238" height="239" fill="#d2b198"/><rect x="990" y="473" width="238" height="239" fill="url(#g24r)"/><rect x="990" y="473" width="238" height="4" fill="url(#g24t)"/><rect x="990" y="520" width="191" height="192" fill="#c6a690"/><rect x="990" y="522" width="189" height="190" fill="url(#g24i)"/><rect x="990" y="687" width="25" height="25" fill="#d9d9d9"/><polygon points="990,687 1014,687 1014,689 1004,689 1004,697 990,712" fill="#2b2b2b"/><polygon points="990,712 990,700 1003,692 1011,692 1011,702 996,712" fill="#1c1c1c"/><rect x="1228" y="473" width="38" height="239" fill="#d5d1cd"/><rect x="512" y="712" width="239" height="185" fill="#f6e9dd"/><polygon points="512,856 751,712 751,756 558,897 512,897" fill="#f7e7d8"/><polygon points="558,897 751,756 751,897" fill="#f4eae0"/><rect x="749" y="712" width="2" height="185" fill="#f7e8db"/><rect x="751" y="712" width="239" height="170" fill="url(#g33)"/><rect x="1045" y="712" width="104" height="185" fill="url(#gwall)"/><rect x="1148" y="712" width="80" height="185" fill="url(#gwallr)"/><rect x="1045" y="712" width="104" height="70" fill="url(#gwtop)"/><rect x="1148" y="712" width="80" height="100" fill="url(#gwtopr)"/><rect x="1045" y="820" width="104" height="38" fill="url(#gwlow)"/><polygon points="1045,859 1147,859 1193,897 1045,897" fill="url(#gfloor)"/><polygon points="1045,857 1147,857 1195,897 1191,897 1147,860.5 1045,860.5" fill="#c8bdb2"/><rect x="990" y="712" width="56" height="185" fill="url(#gcol)"/><rect x="990" y="712" width="56" height="185" fill="url(#gcolv)"/><rect x="1044.5" y="712" width="1.5" height="185" fill="#bca594"/><rect x="1046" y="777" width="12" height="39" rx="2" fill="#b8aca1" stroke="#a89a8e" stroke-width="1"/><path d="M1084.7 766 L1084.7 826 Q1066 830 1062 842 L1058 874 Q1054 882 1047 883" stroke="#d9d1c6" stroke-width="1.8" fill="none" stroke-linecap="round"/><path d="M1119.2 772 L1121.2 838 L1123.2 870 Q1124 878 1128 878.5" stroke="#d9d1c6" stroke-width="1.8" fill="none" stroke-linecap="round"/><path d="M1144 773 L1142 818 Q1142 838 1146 844 Q1166 850 1168 868 L1172.6 897" stroke="#d9d1c6" stroke-width="1.8" fill="none" stroke-linecap="round"/><ellipse cx="1112.3" cy="836.5" rx="25.7" ry="9.9" fill="#d3cabb"/><ellipse cx="1112.3" cy="837.5" rx="22" ry="7.5" fill="#c9bfaf"/><path d="M1106.4 771 L1108.4 826 Q1108 848 1103 862 Q1100 872 1100.5 897" stroke="#d9d1c6" stroke-width="1.8" fill="none" stroke-linecap="round"/><ellipse cx="1116" cy="759.3" rx="64" ry="14.5" transform="rotate(7.5 1116 759.3)" fill="#9c8d80"/><ellipse cx="1116" cy="757.5" rx="64" ry="14.5" transform="rotate(7.5 1116 757.5)" fill="#d6cec3"/><ellipse cx="1087" cy="745" rx="22" ry="6.5" transform="rotate(14 1087 745)" fill="#cfc5ac"/><polygon points="1074.5,712 1086,712 1085,744 1076.5,743" fill="url(#gcup)"/><polygon points="1087.5,712 1099,712 1097.5,747 1089,746" fill="url(#gcup)"/><rect x="1109.5" y="712" width="35.5" height="35" fill="url(#gth)"/><path d="M1109.5 743 Q1127 750 1145 744 L1145 748 Q1127 754 1109.5 747 Z" fill="#2b2725"/><polygon points="1125,749 1160,753 1157,766 1121,760" fill="#e2ddd4"/><polygon points="1121,760 1157,766 1157,767.5 1121,761.5" fill="#c4bbb0"/><rect x="1228" y="712" width="38" height="185" fill="url(#g35)"/><rect x="1228" y="712" width="1.5" height="185" fill="#cfc6bd" opacity=".7"/></svg>
<div style="left:1496px;top:67px;width:38px;height:12px;background:#424242;"></div>
<div style="left:1496px;top:79px;width:38px;height:957px;background:#535353;"></div>
<div style="left:1534px;top:79px;width:2px;height:957px;background:#383838;"></div>
<div style="left:1496px;top:119px;width:38px;height:1px;background:#383838;"></div>
<div style="left:1496px;top:160px;width:38px;height:1px;background:#383838;"></div>
<div style="left:1496px;top:229px;width:38px;height:1px;background:#383838;"></div>
<div style="left:1506px;top:83px;width:1px;height:5px;background:#454545;"></div>
<div style="left:1508px;top:83px;width:1px;height:5px;background:#454545;"></div>
<div style="left:1510px;top:83px;width:1px;height:5px;background:#454545;"></div>
<div style="left:1512px;top:83px;width:1px;height:5px;background:#454545;"></div>
<div style="left:1514px;top:83px;width:1px;height:5px;background:#454545;"></div>
<div style="left:1516px;top:83px;width:1px;height:5px;background:#454545;"></div>
<div style="left:1518px;top:83px;width:1px;height:5px;background:#454545;"></div>
<div style="left:1520px;top:83px;width:1px;height:5px;background:#454545;"></div>
<div style="left:1522px;top:83px;width:1px;height:5px;background:#454545;"></div>
<div style="left:1524px;top:83px;width:1px;height:5px;background:#454545;"></div>
<div style="left:1506px;top:124px;width:1px;height:5px;background:#454545;"></div>
<div style="left:1508px;top:124px;width:1px;height:5px;background:#454545;"></div>
<div style="left:1510px;top:124px;width:1px;height:5px;background:#454545;"></div>
<div style="left:1512px;top:124px;width:1px;height:5px;background:#454545;"></div>
<div style="left:1514px;top:124px;width:1px;height:5px;background:#454545;"></div>
<div style="left:1516px;top:124px;width:1px;height:5px;background:#454545;"></div>
<div style="left:1518px;top:124px;width:1px;height:5px;background:#454545;"></div>
<div style="left:1520px;top:124px;width:1px;height:5px;background:#454545;"></div>
<div style="left:1522px;top:124px;width:1px;height:5px;background:#454545;"></div>
<div style="left:1524px;top:124px;width:1px;height:5px;background:#454545;"></div>
<div style="left:1506px;top:165px;width:1px;height:5px;background:#454545;"></div>
<div style="left:1508px;top:165px;width:1px;height:5px;background:#454545;"></div>
<div style="left:1510px;top:165px;width:1px;height:5px;background:#454545;"></div>
<div style="left:1512px;top:165px;width:1px;height:5px;background:#454545;"></div>
<div style="left:1514px;top:165px;width:1px;height:5px;background:#454545;"></div>
<div style="left:1516px;top:165px;width:1px;height:5px;background:#454545;"></div>
<div style="left:1518px;top:165px;width:1px;height:5px;background:#454545;"></div>
<div style="left:1520px;top:165px;width:1px;height:5px;background:#454545;"></div>
<div style="left:1522px;top:165px;width:1px;height:5px;background:#454545;"></div>
<div style="left:1524px;top:165px;width:1px;height:5px;background:#454545;"></div>
<svg style="left:1519px;top:69px;" width="12" height="8" viewBox="0 0 12 8"><path d="M4 1.5 L1 4 L4 6.5 Z M9 1.5 L6 4 L9 6.5 Z" fill="#c8c8c8"/></svg>
<div style="left:1536px;top:67px;width:282px;height:12px;background:#424242;"></div>
<svg style="left:1803px;top:69px;" width="12" height="8" viewBox="0 0 12 8"><path d="M1 1.5 L4 4 L1 6.5 Z M6 1.5 L9 4 L6 6.5 Z" fill="#c8c8c8"/></svg>
<div style="left:1818px;top:79px;width:3px;height:957px;background:#383838;"></div>
<div style="left:1819px;top:80px;width:1px;height:955px;background:#484848;"></div>
<div style="left:1821px;top:67px;width:93px;height:12px;background:#424242;"></div>
<div style="left:1821px;top:79px;width:93px;height:957px;background:#535353;"></div>
<div style="left:1821px;top:119px;width:93px;height:1px;background:#383838;"></div>
<svg style="left:1900px;top:69px;" width="12" height="8" viewBox="0 0 12 8"><path d="M4 1.5 L1 4 L4 6.5 Z M9 1.5 L6 4 L9 6.5 Z" fill="#c8c8c8"/></svg>
<div style="left:1858px;top:83px;width:1px;height:5px;background:#454545;"></div>
<div style="left:1860px;top:83px;width:1px;height:5px;background:#454545;"></div>
<div style="left:1862px;top:83px;width:1px;height:5px;background:#454545;"></div>
<div style="left:1864px;top:83px;width:1px;height:5px;background:#454545;"></div>
<div style="left:1866px;top:83px;width:1px;height:5px;background:#454545;"></div>
<div style="left:1868px;top:83px;width:1px;height:5px;background:#454545;"></div>
<div style="left:1870px;top:83px;width:1px;height:5px;background:#454545;"></div>
<div style="left:1872px;top:83px;width:1px;height:5px;background:#454545;"></div>
<div style="left:1874px;top:83px;width:1px;height:5px;background:#454545;"></div>
<div style="left:1876px;top:83px;width:1px;height:5px;background:#454545;"></div>
<span style="left:1858px;top:97.96px;font-size:9.5px;line-height:9.5px;color:#e8e8e8;font-weight:bold;letter-spacing:-0.125px;">Libraries</span>
<div style="left:1536px;top:79px;width:282px;height:28px;background:#424242;"></div>
<div style="left:1536px;top:107px;width:282px;height:258px;background:#535353;"></div>
<div style="left:1536px;top:79px;width:44px;height:27px;background:#454545;"></div>
<div style="left:1580px;top:79px;width:1px;height:27px;background:#383838;"></div>
<div style="left:1581px;top:79px;width:62px;height:28px;background:#535353;"></div>
<div style="left:1643px;top:79px;width:1px;height:27px;background:#383838;"></div>
<div style="left:1536px;top:106px;width:45px;height:1px;background:#383838;"></div>
<div style="left:1644px;top:106px;width:174px;height:1px;background:#383838;"></div>
<span style="left:1545px;top:87.96px;font-size:9.5px;line-height:9.5px;color:#a8a8a8;font-weight:bold;letter-spacing:0.039px;">Color</span>
<span style="left:1590px;top:87.96px;font-size:9.5px;line-height:9.5px;color:#f0f0f0;font-weight:bold;letter-spacing:-0.041px;">Swatches</span>
<div style="left:1802px;top:89px;width:10px;height:1px;background:#c0c0c0;"></div>
<div style="left:1802px;top:91px;width:10px;height:1px;background:#c0c0c0;"></div>
<div style="left:1802px;top:93px;width:10px;height:1px;background:#c0c0c0;"></div>
<div style="left:1802px;top:95px;width:10px;height:1px;background:#c0c0c0;"></div>
<div style="left:1540px;top:115px;width:258px;height:18px;background:#3e3e3e;"></div>
<div style="left:1541px;top:116px;width:15px;height:16px;background:#a3707c;"></div>
<div style="left:1557px;top:116px;width:15px;height:16px;background:#b07870;"></div>
<div style="left:1573px;top:116px;width:15px;height:16px;background:#ac726f;"></div>
<div style="left:1589px;top:116px;width:15px;height:16px;background:#ab7272;"></div>
<div style="left:1605px;top:116px;width:15px;height:16px;background:#a96e70;"></div>
<div style="left:1621px;top:116px;width:15px;height:16px;background:#8a65a6;"></div>
<div style="left:1637px;top:116px;width:15px;height:16px;background:#8068a6;"></div>
<div style="left:1653px;top:116px;width:15px;height:16px;background:#b07a6c;"></div>
<div style="left:1669px;top:116px;width:15px;height:16px;background:#ae7570;"></div>
<div style="left:1685px;top:116px;width:15px;height:16px;background:#ad716f;"></div>
<div style="left:1701px;top:116px;width:15px;height:16px;background:#a86c6c;"></div>
<div style="left:1717px;top:116px;width:15px;height:16px;background:#b07b6d;"></div>
<div style="left:1733px;top:116px;width:15px;height:16px;background:#b2836c;"></div>
<div style="left:1749px;top:116px;width:15px;height:16px;background:#b58c6b;"></div>
<div style="left:1765px;top:116px;width:15px;height:16px;background:#b5916a;"></div>
<div style="left:1781px;top:116px;width:15px;height:16px;background:#b49a69;"></div>
<div style="left:1801px;top:137px;width:17px;height:203px;background:#4e4e4e;"></div>
<div style="left:1788px;top:137px;width:13px;height:203px;background:#555555;"></div>
<div style="left:1535px;top:137px;width:253px;height:19px;background:#414141;"></div>
<div style="left:1535px;top:155px;width:253px;height:19px;background:#414141;"></div>
<div style="left:1535px;top:173px;width:253px;height:19px;background:#414141;"></div>
<div style="left:1535px;top:191px;width:253px;height:19px;background:#414141;"></div>
<div style="left:1535px;top:209px;width:253px;height:19px;background:#414141;"></div>
<div style="left:1535px;top:227px;width:253px;height:19px;background:#414141;"></div>
<div style="left:1535px;top:245px;width:253px;height:19px;background:#414141;"></div>
<div style="left:1535px;top:263px;width:253px;height:19px;background:#414141;"></div>
<div style="left:1535px;top:281px;width:181px;height:19px;background:#414141;"></div>
<div style="left:1536px;top:138px;width:17px;height:17px;background:#ff0000;"></div>
<div style="left:1554px;top:138px;width:17px;height:17px;background:#ffff00;"></div>
<div style="left:1572px;top:138px;width:17px;height:17px;background:#00ff00;"></div>
<div style="left:1590px;top:138px;width:17px;height:17px;background:#00ffff;"></div>
<div style="left:1608px;top:138px;width:17px;height:17px;background:#0000ff;"></div>
<div style="left:1626px;top:138px;width:17px;height:17px;background:#ff00ff;"></div>
<div style="left:1644px;top:138px;width:17px;height:17px;background:#ffffff;"></div>
<div style="left:1662px;top:138px;width:17px;height:17px;background:#ebebeb;"></div>
<div style="left:1680px;top:138px;width:17px;height:17px;background:#e1e1e1;"></div>
<div style="left:1698px;top:138px;width:17px;height:17px;background:#d7d7d7;"></div>
<div style="left:1716px;top:138px;width:17px;height:17px;background:#cccccc;"></div>
<div style="left:1734px;top:138px;width:17px;height:17px;background:#c2c2c2;"></div>
<div style="left:1752px;top:138px;width:17px;height:17px;background:#b7b7b7;"></div>
<div style="left:1770px;top:138px;width:17px;height:17px;background:#acacac;"></div>
<div style="left:1536px;top:156px;width:17px;height:17px;background:#a0a0a0;"></div>
<div style="left:1554px;top:156px;width:17px;height:17px;background:#959595;"></div>
<div style="left:1572px;top:156px;width:17px;height:17px;background:#ed1c24;"></div>
<div style="left:1590px;top:156px;width:17px;height:17px;background:#fff200;"></div>
<div style="left:1608px;top:156px;width:17px;height:17px;background:#00a651;"></div>
<div style="left:1626px;top:156px;width:17px;height:17px;background:#00aeef;"></div>
<div style="left:1644px;top:156px;width:17px;height:17px;background:#2e3192;"></div>
<div style="left:1662px;top:156px;width:17px;height:17px;background:#ec008c;"></div>
<div style="left:1680px;top:156px;width:17px;height:17px;background:#898989;"></div>
<div style="left:1698px;top:156px;width:17px;height:17px;background:#7d7d7d;"></div>
<div style="left:1716px;top:156px;width:17px;height:17px;background:#707070;"></div>
<div style="left:1734px;top:156px;width:17px;height:17px;background:#626262;"></div>
<div style="left:1752px;top:156px;width:17px;height:17px;background:#555555;"></div>
<div style="left:1770px;top:156px;width:17px;height:17px;background:#464646;"></div>
<div style="left:1536px;top:174px;width:17px;height:17px;background:#363636;"></div>
<div style="left:1554px;top:174px;width:17px;height:17px;background:#262626;"></div>
<div style="left:1572px;top:174px;width:17px;height:17px;background:#111111;"></div>
<div style="left:1590px;top:174px;width:17px;height:17px;background:#000000;"></div>
<div style="left:1608px;top:174px;width:17px;height:17px;background:#f7977a;"></div>
<div style="left:1626px;top:174px;width:17px;height:17px;background:#f9ad81;"></div>
<div style="left:1644px;top:174px;width:17px;height:17px;background:#fdc68a;"></div>
<div style="left:1662px;top:174px;width:17px;height:17px;background:#fff79a;"></div>
<div style="left:1680px;top:174px;width:17px;height:17px;background:#c4df9b;"></div>
<div style="left:1698px;top:174px;width:17px;height:17px;background:#a2d39c;"></div>
<div style="left:1716px;top:174px;width:17px;height:17px;background:#82ca9d;"></div>
<div style="left:1734px;top:174px;width:17px;height:17px;background:#7bcdc8;"></div>
<div style="left:1752px;top:174px;width:17px;height:17px;background:#6ecff6;"></div>
<div style="left:1770px;top:174px;width:17px;height:17px;background:#7ea7d8;"></div>
<div style="left:1536px;top:192px;width:17px;height:17px;background:#8493ca;"></div>
<div style="left:1554px;top:192px;width:17px;height:17px;background:#8882be;"></div>
<div style="left:1572px;top:192px;width:17px;height:17px;background:#a187be;"></div>
<div style="left:1590px;top:192px;width:17px;height:17px;background:#bc8dbf;"></div>
<div style="left:1608px;top:192px;width:17px;height:17px;background:#f49ac2;"></div>
<div style="left:1626px;top:192px;width:17px;height:17px;background:#f6989d;"></div>
<div style="left:1644px;top:192px;width:17px;height:17px;background:#f26c4f;"></div>
<div style="left:1662px;top:192px;width:17px;height:17px;background:#f68e55;"></div>
<div style="left:1680px;top:192px;width:17px;height:17px;background:#fbaf5c;"></div>
<div style="left:1698px;top:192px;width:17px;height:17px;background:#fff467;"></div>
<div style="left:1716px;top:192px;width:17px;height:17px;background:#acd372;"></div>
<div style="left:1734px;top:192px;width:17px;height:17px;background:#7cc576;"></div>
<div style="left:1752px;top:192px;width:17px;height:17px;background:#3bb878;"></div>
<div style="left:1770px;top:192px;width:17px;height:17px;background:#1abbb4;"></div>
<div style="left:1536px;top:210px;width:17px;height:17px;background:#00bff3;"></div>
<div style="left:1554px;top:210px;width:17px;height:17px;background:#438cca;"></div>
<div style="left:1572px;top:210px;width:17px;height:17px;background:#5574b9;"></div>
<div style="left:1590px;top:210px;width:17px;height:17px;background:#605ca8;"></div>
<div style="left:1608px;top:210px;width:17px;height:17px;background:#855fa8;"></div>
<div style="left:1626px;top:210px;width:17px;height:17px;background:#a763a8;"></div>
<div style="left:1644px;top:210px;width:17px;height:17px;background:#f06ea9;"></div>
<div style="left:1662px;top:210px;width:17px;height:17px;background:#f26d7d;"></div>
<div style="left:1680px;top:210px;width:17px;height:17px;background:#ed1c24;"></div>
<div style="left:1698px;top:210px;width:17px;height:17px;background:#f26522;"></div>
<div style="left:1716px;top:210px;width:17px;height:17px;background:#f7941d;"></div>
<div style="left:1734px;top:210px;width:17px;height:17px;background:#fff200;"></div>
<div style="left:1752px;top:210px;width:17px;height:17px;background:#8dc73f;"></div>
<div style="left:1770px;top:210px;width:17px;height:17px;background:#39b54a;"></div>
<div style="left:1536px;top:228px;width:17px;height:17px;background:#00a651;"></div>
<div style="left:1554px;top:228px;width:17px;height:17px;background:#00a99d;"></div>
<div style="left:1572px;top:228px;width:17px;height:17px;background:#00aeef;"></div>
<div style="left:1590px;top:228px;width:17px;height:17px;background:#0072bc;"></div>
<div style="left:1608px;top:228px;width:17px;height:17px;background:#0054a6;"></div>
<div style="left:1626px;top:228px;width:17px;height:17px;background:#2e3192;"></div>
<div style="left:1644px;top:228px;width:17px;height:17px;background:#662d91;"></div>
<div style="left:1662px;top:228px;width:17px;height:17px;background:#92278f;"></div>
<div style="left:1680px;top:228px;width:17px;height:17px;background:#ec008c;"></div>
<div style="left:1698px;top:228px;width:17px;height:17px;background:#ed145b;"></div>
<div style="left:1716px;top:228px;width:17px;height:17px;background:#9e0b0f;"></div>
<div style="left:1734px;top:228px;width:17px;height:17px;background:#a0410d;"></div>
<div style="left:1752px;top:228px;width:17px;height:17px;background:#a36209;"></div>
<div style="left:1770px;top:228px;width:17px;height:17px;background:#aba000;"></div>
<div style="left:1536px;top:246px;width:17px;height:17px;background:#598527;"></div>
<div style="left:1554px;top:246px;width:17px;height:17px;background:#1a7b30;"></div>
<div style="left:1572px;top:246px;width:17px;height:17px;background:#007236;"></div>
<div style="left:1590px;top:246px;width:17px;height:17px;background:#00746b;"></div>
<div style="left:1608px;top:246px;width:17px;height:17px;background:#0076a3;"></div>
<div style="left:1626px;top:246px;width:17px;height:17px;background:#004b80;"></div>
<div style="left:1644px;top:246px;width:17px;height:17px;background:#003471;"></div>
<div style="left:1662px;top:246px;width:17px;height:17px;background:#1b1464;"></div>
<div style="left:1680px;top:246px;width:17px;height:17px;background:#440e62;"></div>
<div style="left:1698px;top:246px;width:17px;height:17px;background:#630460;"></div>
<div style="left:1716px;top:246px;width:17px;height:17px;background:#9e005d;"></div>
<div style="left:1734px;top:246px;width:17px;height:17px;background:#9e0039;"></div>
<div style="left:1752px;top:246px;width:17px;height:17px;background:#790000;"></div>
<div style="left:1770px;top:246px;width:17px;height:17px;background:#7b2e00;"></div>
<div style="left:1536px;top:264px;width:17px;height:17px;background:#7d4900;"></div>
<div style="left:1554px;top:264px;width:17px;height:17px;background:#827b00;"></div>
<div style="left:1572px;top:264px;width:17px;height:17px;background:#406618;"></div>
<div style="left:1590px;top:264px;width:17px;height:17px;background:#005e20;"></div>
<div style="left:1608px;top:264px;width:17px;height:17px;background:#005826;"></div>
<div style="left:1626px;top:264px;width:17px;height:17px;background:#005952;"></div>
<div style="left:1644px;top:264px;width:17px;height:17px;background:#005b7f;"></div>
<div style="left:1662px;top:264px;width:17px;height:17px;background:#003663;"></div>
<div style="left:1680px;top:264px;width:17px;height:17px;background:#002157;"></div>
<div style="left:1698px;top:264px;width:17px;height:17px;background:#0d004c;"></div>
<div style="left:1716px;top:264px;width:17px;height:17px;background:#32004b;"></div>
<div style="left:1734px;top:264px;width:17px;height:17px;background:#4b0049;"></div>
<div style="left:1752px;top:264px;width:17px;height:17px;background:#7b0046;"></div>
<div style="left:1770px;top:264px;width:17px;height:17px;background:#7a0026;"></div>
<div style="left:1536px;top:282px;width:17px;height:17px;background:#c7b299;"></div>
<div style="left:1554px;top:282px;width:17px;height:17px;background:#998675;"></div>
<div style="left:1572px;top:282px;width:17px;height:17px;background:#736357;"></div>
<div style="left:1590px;top:282px;width:17px;height:17px;background:#534741;"></div>
<div style="left:1608px;top:282px;width:17px;height:17px;background:#362f2d;"></div>
<div style="left:1626px;top:282px;width:17px;height:17px;background:#c69c6d;"></div>
<div style="left:1644px;top:282px;width:17px;height:17px;background:#a67c52;"></div>
<div style="left:1662px;top:282px;width:17px;height:17px;background:#8c6239;"></div>
<div style="left:1680px;top:282px;width:17px;height:17px;background:#754c24;"></div>
<div style="left:1698px;top:282px;width:17px;height:17px;background:#603913;"></div>
<div style="left:1536px;top:340px;width:282px;height:1px;background:#383838;"></div>
<div style="left:1536px;top:365px;width:282px;height:3px;background:#383838;"></div>
<div style="left:1536px;top:368px;width:282px;height:28px;background:#424242;"></div>
<div style="left:1536px;top:396px;width:282px;height:257px;background:#535353;"></div>
<div style="left:1536px;top:368px;width:66px;height:28px;background:#535353;"></div>
<div style="left:1602px;top:368px;width:1px;height:27px;background:#383838;"></div>
<div style="left:1603px;top:368px;width:76px;height:27px;background:#474747;"></div>
<div style="left:1679px;top:368px;width:1px;height:27px;background:#383838;"></div>
<div style="left:1603px;top:395px;width:215px;height:1px;background:#383838;"></div>
<span style="left:1545px;top:376.96px;font-size:9.5px;line-height:9.5px;color:#f0f0f0;font-weight:bold;">Properties</span>
<span style="left:1611px;top:376.75px;font-size:9.75px;line-height:9.75px;color:#a8a8a8;font-weight:bold;letter-spacing:-0.050px;">Adjustments</span>
<div style="left:1802px;top:378px;width:10px;height:1px;background:#c0c0c0;"></div>
<div style="left:1802px;top:380px;width:10px;height:1px;background:#c0c0c0;"></div>
<div style="left:1802px;top:382px;width:10px;height:1px;background:#c0c0c0;"></div>
<div style="left:1802px;top:384px;width:10px;height:1px;background:#c0c0c0;"></div>
<div style="left:1547px;top:402px;width:22px;height:22px;background:#393939;border-radius:2px;"></div>
<span style="left:1575px;top:408.11px;font-size:10.5px;line-height:10.5px;color:#dcdcdc;font-weight:bold;letter-spacing:-0.063px;">Document Properties</span>
<div style="left:1536px;top:429px;width:282px;height:1px;background:#404040;"></div>
<div style="left:1803px;top:430px;width:15px;height:198px;background:#4b4b4b;"></div>
<span style="left:1551px;top:440.54px;font-size:10.0px;line-height:10.0px;color:#d0d0d0;letter-spacing:-0.018px;">W:</span>
<span style="left:1571px;top:440.96px;font-size:9.5px;line-height:9.5px;color:#d6d6d6;letter-spacing:0.030px;">50,4 cm</span>
<span style="left:1670px;top:440.54px;font-size:10.0px;line-height:10.0px;color:#d0d0d0;">H:</span>
<span style="left:1688px;top:440.96px;font-size:9.5px;line-height:9.5px;color:#d6d6d6;letter-spacing:0.053px;">33,65 cm</span>
<span style="left:1554px;top:463.96px;font-size:9.5px;line-height:9.5px;color:#d0d0d0;letter-spacing:0.012px;">X:</span>
<span style="left:1571px;top:463.54px;font-size:10px;line-height:10px;color:#d6d6d6;">0</span>
<span style="left:1671px;top:463.96px;font-size:9.5px;line-height:9.5px;color:#d0d0d0;letter-spacing:0.024px;">Y:</span>
<span style="left:1688px;top:463.54px;font-size:10px;line-height:10px;color:#d6d6d6;">0</span>
<div style="left:1539px;top:486px;width:261px;height:1px;background:#444;"></div>
<span style="left:1546px;top:497.04px;font-size:10.0px;line-height:10.0px;color:#d6d6d6;letter-spacing:-0.036px;">Resolution: 300 pixels/inch</span>
<div style="left:1536px;top:653px;width:282px;height:3px;background:#383838;"></div>
<div style="left:1536px;top:656px;width:282px;height:28px;background:#424242;"></div>
<div style="left:1536px;top:684px;width:282px;height:351px;background:#535353;"></div>
<div style="left:1536px;top:656px;width:47px;height:28px;background:#535353;"></div>
<div style="left:1583px;top:656px;width:1px;height:27px;background:#383838;"></div>
<div style="left:1584px;top:656px;width:59px;height:27px;background:#474747;"></div>
<div style="left:1643px;top:656px;width:1px;height:27px;background:#383838;"></div>
<div style="left:1644px;top:656px;width:44px;height:27px;background:#474747;"></div>
<div style="left:1688px;top:656px;width:1px;height:27px;background:#383838;"></div>
<div style="left:1584px;top:683px;width:234px;height:1px;background:#383838;"></div>
<span style="left:1545px;top:664.96px;font-size:9.5px;line-height:9.5px;color:#f0f0f0;font-weight:bold;letter-spacing:-0.356px;">Layers</span>
<span style="left:1592px;top:664.96px;font-size:9.5px;line-height:9.5px;color:#b4b4b4;font-weight:bold;letter-spacing:-0.158px;">Channels</span>
<span style="left:1653px;top:664.96px;font-size:9.5px;line-height:9.5px;color:#b4b4b4;font-weight:bold;letter-spacing:-0.074px;">Paths</span>
<div style="left:1802px;top:667px;width:10px;height:1px;background:#c0c0c0;"></div>
<div style="left:1802px;top:669px;width:10px;height:1px;background:#c0c0c0;"></div>
<div style="left:1802px;top:671px;width:10px;height:1px;background:#c0c0c0;"></div>
<div style="left:1802px;top:673px;width:10px;height:1px;background:#c0c0c0;"></div>
<div style="left:1540px;top:693px;width:90px;height:18px;background:#4e4e4e;border:1px solid #5c5c5c;box-sizing:border-box;border-radius:3px;"></div>
<span style="left:1562px;top:696.96px;font-size:9.5px;line-height:9.5px;color:#8c8c8c;">Kind</span>
<svg style="left:1619px;top:700px;" width="7" height="5" viewBox="0 0 7 5"><path d="M0.5 0.5 L3.5 3.5 L6.5 0.5" stroke="#6c6c6c" stroke-width="1" fill="none"/></svg>
<div style="left:1536px;top:715px;width:282px;height:1px;background:#474747;"></div>
<div style="left:1540px;top:720px;width:130px;height:18px;background:#4e4e4e;border:1px solid #5c5c5c;box-sizing:border-box;border-radius:3px;"></div>
<span style="left:1548px;top:723.75px;font-size:9.75px;line-height:9.75px;color:#8c8c8c;letter-spacing:0.013px;">Normal</span>
<svg style="left:1660px;top:727px;" width="7" height="5" viewBox="0 0 7 5"><path d="M0.5 0.5 L3.5 3.5 L6.5 0.5" stroke="#6c6c6c" stroke-width="1" fill="none"/></svg>
<span style="left:1678px;top:723.75px;font-size:9.75px;line-height:9.75px;color:#9c9c9c;letter-spacing:0.030px;">Opacity:</span>
<div style="left:1719px;top:720px;width:51px;height:18px;background:#4e4e4e;border:1px solid #5c5c5c;box-sizing:border-box;border-radius:3px;"></div>
<div style="left:1754px;top:720px;width:1px;height:18px;background:#5c5c5c;"></div>
<span style="left:1723px;top:723.96px;font-size:9.5px;line-height:9.5px;color:#767676;letter-spacing:0.051px;">100%</span>
<svg style="left:1759px;top:727px;" width="7" height="5" viewBox="0 0 7 5"><path d="M0.5 0.5 L3.5 3.5 L6.5 0.5" stroke="#6c6c6c" stroke-width="1" fill="none"/></svg>
<div style="left:1536px;top:742px;width:282px;height:1px;background:#474747;"></div>
<span style="left:1542px;top:750.96px;font-size:9.5px;line-height:9.5px;color:#9c9c9c;letter-spacing:0.059px;">Lock:</span>
<span style="left:1700px;top:750.96px;font-size:9.5px;line-height:9.5px;color:#9c9c9c;letter-spacing:-0.155px;">Fill:</span>
<div style="left:1719px;top:747px;width:51px;height:18px;background:#4e4e4e;border:1px solid #5c5c5c;box-sizing:border-box;border-radius:3px;"></div>
<div style="left:1754px;top:747px;width:1px;height:18px;background:#5c5c5c;"></div>
<span style="left:1723px;top:750.96px;font-size:9.5px;line-height:9.5px;color:#767676;letter-spacing:0.051px;">100%</span>
<svg style="left:1759px;top:754px;" width="7" height="5" viewBox="0 0 7 5"><path d="M0.5 0.5 L3.5 3.5 L6.5 0.5" stroke="#6c6c6c" stroke-width="1" fill="none"/></svg>
<div style="left:1536px;top:770px;width:282px;height:241px;background:#4d4d4d;"></div>
<div style="left:1803px;top:771px;width:15px;height:240px;background:#4a4a4a;"></div>
<div style="left:1536px;top:771px;width:31px;height:31px;background:#505050;"></div>
<div style="left:1567px;top:771px;width:236px;height:30px;background:#696969;"></div>
<div style="left:1536px;top:770px;width:282px;height:1px;background:#454545;"></div>
<div style="left:1536px;top:802px;width:267px;height:1px;background:#454545;"></div>
<div style="left:1566px;top:771px;width:1px;height:31px;background:#454545;"></div>
<div style="left:1570px;top:774px;width:32px;height:23px;background:#e9e9e9;border:1px solid #1e1e1e;box-sizing:border-box;"></div>
<div style="left:1571px;top:775px;width:30px;height:21px;background:none;border:1px solid #fbfbfb;box-sizing:border-box;"></div>
<div style="left:1576px;top:786px;width:22px;height:9px;background:#ecd3bf;border-radius:5px 6px 0 0;"></div>
<div style="left:1580px;top:790px;width:16px;height:5px;background:#eec8a8;border-radius:4px 4px 0 0;"></div>
<div style="left:1572px;top:784px;width:26px;height:2px;background:#e0d8d2;opacity:.7;"></div>
<div style="left:1596px;top:784px;width:4px;height:11px;background:#dcd6d2;"></div>
<div style="left:1580px;top:787px;width:2px;height:1px;background:#8a7c70;"></div>
<div style="left:1591px;top:787px;width:2px;height:1px;background:#8f8074;"></div>
<div style="left:1596px;top:789px;width:1px;height:3px;background:#6a5e56;"></div>
<span style="left:1612.5px;top:781.53px;font-size:10.0px;line-height:10.0px;color:#f4f4f4;font-style:italic;letter-spacing:0.063px;">Background</span>
<div style="left:1536px;top:1011px;width:282px;height:1px;background:#383838;"></div>
<div style="left:8px;top:96px;width:31px;height:24px;background:#363636;border:1px solid #5a5a5a;box-sizing:border-box;border-radius:3px;"></div>
<svg style="left:4px;top:95.5px;" width="40" height="26" viewBox="0 0 40 26"><path d="M18.5 5.4 L15.6 9 L18 9 L18 12.5 L14.5 12.5 L14.5 10.1 L10.9 13 L14.5 15.9 L14.5 13.5 L18 13.5 L18 17 L15.6 17 L18.5 20.6 L21.4 17 L19 17 L19 13.5 L22.5 13.5 L22.5 15.9 L26.1 13 L22.5 10.1 L22.5 12.5 L19 12.5 L19 9 L21.4 9 Z" fill="#dadada"/><path d="M32.2 17.8 L32.2 21 L29 21 Z" fill="#a8a8a8"/></svg>
<svg style="left:4px;top:121.5px;" width="40" height="26" viewBox="0 0 40 26"><path d="M11.5 9 V6 H14.5 M16.5 6 H19.5 M21.5 6 H24 M25.5 6 H26.5 V9 M26.5 11 V13.5 M26.5 15.5 V18 H24 M22 18 H19 M17 18 H14 M12.5 18 H11.5 V15.5 M11.5 13.5 V11" stroke="#dadada" fill="none" stroke-width="1.25"/><path d="M32.2 17.8 L32.2 21 L29 21 Z" fill="#a8a8a8"/></svg>
<svg style="left:4px;top:147.5px;" width="40" height="26" viewBox="0 0 40 26"><path d="M11.6 6.2 L20.8 9.3 L26.6 3.9 L26.6 12.8 L19.4 15.1 M11.6 6.2 L17.6 14.4 M17.2 15.8 L12.3 17.2 M18.4 16.2 L16.4 20.3" stroke="#dadada" fill="none" stroke-width="1.3"/><circle cx="18.2" cy="15.2" r="1.3" stroke="#dadada" fill="none" stroke-width="1"/><path d="M32.2 17.8 L32.2 21 L29 21 Z" fill="#a8a8a8"/></svg>
<svg style="left:4px;top:173.5px;" width="40" height="26" viewBox="0 0 40 26"><path d="M13 19 L22.8 9.2" stroke="#dadada" stroke-width="3.6" stroke-linecap="round"/><path d="M20.2 11.8 L22.6 9.4" stroke="#4a4a4a" stroke-width="1.2" stroke-linecap="round"/><path d="M18.1 3.6 L18.7 5.2 L20.3 5.8 L18.7 6.4 L18.1 8 L17.5 6.4 L15.9 5.8 L17.5 5.2 Z M26.6 3 L27.4 5 L29.4 5.8 L27.4 6.6 L26.6 8.6 L25.8 6.6 L23.8 5.8 L25.8 5 Z M27.4 9.8 L28 11.4 L29.6 12 L28 12.6 L27.4 14.2 L26.8 12.6 L25.2 12 L26.8 11.4 Z" fill="#dadada"/><path d="M32.2 17.8 L32.2 21 L29 21 Z" fill="#a8a8a8"/></svg>
<svg style="left:4px;top:199.5px;" width="40" height="26" viewBox="0 0 40 26"><path d="M9.2 7.6 H11.7 M13.9 3.9 V16.8 H21 M16.2 7.6 H23.5 V20 M25.4 16.8 H27.8" stroke="#dadada" fill="none" stroke-width="2"/><path d="M32.2 17.8 L32.2 21 L29 21 Z" fill="#a8a8a8"/></svg>
<svg style="left:4px;top:225.5px;" width="40" height="26" viewBox="0 0 40 26"><path d="M12 19 L19.4 11.6" stroke="#dadada" stroke-width="3.6" stroke-linecap="round"/><path d="M12.2 18.8 L19 12" stroke="#535353" stroke-width="1.5" stroke-linecap="round"/><path d="M20 11 L25.4 5.8" stroke="#dadada" stroke-width="4" stroke-linecap="round"/><path d="M18 8.2 L22.8 13" stroke="#dadada" stroke-width="2.6"/><path d="M32.2 17.8 L32.2 21 L29 21 Z" fill="#a8a8a8"/></svg>
<svg style="left:4px;top:251.5px;" width="40" height="26" viewBox="0 0 40 26"><g transform="rotate(-40 18.9 12.4)"><rect x="9.2" y="8.5" width="19.4" height="7.8" rx="2" fill="#dadada"/><rect x="15.5" y="8.5" width="6.8" height="7.8" fill="#3c3c3c"/><circle cx="17.6" cy="11.1" r=".8" fill="#dadada"/><circle cx="20.2" cy="11.1" r=".8" fill="#dadada"/><circle cx="17.6" cy="13.7" r=".8" fill="#dadada"/><circle cx="20.2" cy="13.7" r=".8" fill="#dadada"/><circle cx="18.9" cy="12.4" r=".8" fill="#dadada"/></g><path d="M17 5.6 A4.2 4.2 0 0 0 10.8 12" stroke="#dadada" fill="none" stroke-width="1.1" stroke-dasharray="1 1.2"/><path d="M32.2 17.8 L32.2 21 L29 21 Z" fill="#a8a8a8"/></svg>
<svg style="left:4px;top:277.5px;" width="40" height="26" viewBox="0 0 40 26"><path d="M26 4.8 L26.6 5.6 L19.6 15 L17.6 13.4 Z" fill="#dadada"/><path d="M16.8 14.4 L18.8 16 C18.6 19.4 14.6 20.6 10.8 20.4 C13 19.4 12.6 15 16.8 14.4 Z" fill="#dadada"/><path d="M32.2 17.8 L32.2 21 L29 21 Z" fill="#a8a8a8"/></svg>
<svg style="left:4px;top:303.5px;" width="40" height="26" viewBox="0 0 40 26"><circle cx="19.3" cy="8.4" r="3.6" fill="#dadada"/><path d="M17.6 10.5 L21 10.5 L20.6 15.2 L18 15.2 Z" fill="#dadada"/><rect x="13.1" y="14.9" width="12.7" height="3" rx=".8" fill="#dadada"/><rect x="14.2" y="19.6" width="10.8" height="1.1" fill="#dadada"/><path d="M32.2 17.8 L32.2 21 L29 21 Z" fill="#a8a8a8"/></svg>
<svg style="left:4px;top:329.5px;" width="40" height="26" viewBox="0 0 40 26"><path d="M26.6 5 L27.2 5.8 L21 14.4 L19 12.8 Z" fill="#dadada"/><path d="M18.2 13.6 L20.2 15.2 C20 18.4 16.4 20 12 19.8 C14.4 18.8 14 14.2 18.2 13.6 Z" fill="#dadada"/><path d="M9.4 10.6 L14.6 8 L14 11.4 Z" fill="#dadada"/><path d="M13 9.4 Q17 7.4 21 8.2" stroke="#dadada" fill="none" stroke-width="1.2"/><circle cx="25.4" cy="12" r=".7" fill="#dadada"/><circle cx="25.8" cy="14" r=".7" fill="#dadada"/><circle cx="24.4" cy="16.2" r=".7" fill="#dadada"/><circle cx="22.4" cy="18" r=".7" fill="#dadada"/><path d="M32.2 17.8 L32.2 21 L29 21 Z" fill="#a8a8a8"/></svg>
<svg style="left:4px;top:355.5px;" width="40" height="26" viewBox="0 0 40 26"><path d="M16.6 11.8 L22.4 6.2 L26.8 10.4 L20.8 15.9 Z" fill="#dadada"/><path d="M16.6 11.8 L12.3 16 L15.6 19.1 L20.8 15.9 M15.6 19.1 H26.8" stroke="#dadada" fill="none" stroke-width="1.3"/><path d="M32.2 17.8 L32.2 21 L29 21 Z" fill="#a8a8a8"/></svg>
<svg style="left:4px;top:381.5px;" width="40" height="26" viewBox="0 0 40 26"><path d="M11.2 13.6 L18.9 5.9 L25.4 12.4 L17.7 20.1 Z" stroke="#dadada" fill="none" stroke-width="1.5"/><path d="M19.4 11.8 L15.6 5.2 Q14.6 3.6 15.8 4 Q17 4.6 19.4 11.8" stroke="#dadada" fill="none" stroke-width="1.1"/><circle cx="19.6" cy="12" r="1.1" fill="#dadada"/><path d="M26.8 13.4 Q29.6 17 27 18 Q24.6 17.6 26.8 13.4 Z" fill="#dadada"/><path d="M32.2 17.8 L32.2 21 L29 21 Z" fill="#a8a8a8"/></svg>
<svg style="left:4px;top:407.5px;" width="40" height="26" viewBox="0 0 40 26"><path d="M18.5 4.4 C19.6 8.6 24 11.4 24 15 A5.1 5.1 0 0 1 13.8 15 C13.8 11.4 17.4 8.6 18.5 4.4 Z" fill="#dadada"/><path d="M32.2 17.8 L32.2 21 L29 21 Z" fill="#a8a8a8"/></svg>
<svg style="left:4px;top:433.5px;" width="40" height="26" viewBox="0 0 40 26"><circle cx="20.8" cy="10.3" r="5.1" fill="#dadada"/><path d="M17.3 14.5 L11.4 19.8" stroke="#dadada" stroke-width="2.2" stroke-linecap="round"/><path d="M32.2 17.8 L32.2 21 L29 21 Z" fill="#a8a8a8"/></svg>
<svg style="left:4px;top:459.5px;" width="40" height="26" viewBox="0 0 40 26"><path d="M12.3 19.4 C12.8 16 13.6 13.4 15 11.2 L20.4 7.4 L26.2 12.2 L22.4 17.8 C19.6 18.6 16 19 12.3 19.4 Z" stroke="#dadada" fill="none" stroke-width="1.3"/><path d="M20.4 7.4 L22.6 5.2 L27.4 9.4 L26.2 12.2 Z" fill="#dadada"/><path d="M12.6 19.2 L18.4 14.2" stroke="#dadada" fill="none" stroke-width="1.1"/><circle cx="18.8" cy="13.9" r="1.2" fill="#dadada"/><path d="M32.2 17.8 L32.2 21 L29 21 Z" fill="#a8a8a8"/></svg>
<svg style="left:4px;top:485.5px;" width="40" height="26" viewBox="0 0 40 26"><path d="M13.9 5.4 H26.2 V10 H25.2 C24.8 8 24 7.4 21.7 7.4 V17.2 C21.7 18.4 22.2 18.7 23.9 18.8 V19.8 H16.2 V18.8 C17.9 18.7 18.4 18.4 18.4 17.2 V7.4 C16.1 7.4 15.3 8 14.9 10 H13.9 Z" fill="#dadada"/><path d="M32.2 17.8 L32.2 21 L29 21 Z" fill="#a8a8a8"/></svg>
<svg style="left:4px;top:511.5px;" width="40" height="26" viewBox="0 0 40 26"><path d="M15.4 4.9 L15.4 18.7 L18.5 16 L21.2 20.7 L23.1 19.6 L20.4 14.9 L24.7 14.3 Z" fill="#0e0e0e" stroke="#e4e4e4" stroke-width="1" stroke-linejoin="round"/><path d="M32.2 17.8 L32.2 21 L29 21 Z" fill="#a8a8a8"/></svg>
<svg style="left:4px;top:537.5px;" width="40" height="26" viewBox="0 0 40 26"><rect x="11.8" y="6.4" width="14.8" height="11.4" fill="#7c7c7c" stroke="#ececec" stroke-width="1.3"/><path d="M32.2 17.8 L32.2 21 L29 21 Z" fill="#a8a8a8"/></svg>
<svg style="left:4px;top:563.5px;" width="40" height="26" viewBox="0 0 40 26"><path d="M14.8 14.6 L11 11.6 Q11.6 10.2 13.2 11 L15.6 12.8 L15.6 6.6 Q16.7 5.2 17.8 6.6 L18.4 11.6 L18.7 4.9 Q19.9 3.6 21.1 4.9 L21.4 11.4 L22.1 5.6 Q23.3 4.4 24.4 5.8 L24.4 12 L25.4 8.6 Q26.6 7.6 27.4 9 L26 16 Q25.4 19.4 23.2 20.6 L17.4 20.6 Q15.4 18.4 14.8 14.6 Z" fill="#dadada"/><path d="M32.2 17.8 L32.2 21 L29 21 Z" fill="#a8a8a8"/></svg>
<svg style="left:4px;top:589.5px;" width="40" height="26" viewBox="0 0 40 26"><circle cx="17.1" cy="10.7" r="5.7" stroke="#dadada" fill="none" stroke-width="1.4"/><path d="M21.4 15.2 L26.4 19.8" stroke="#dadada" stroke-width="2.4" stroke-linecap="round"/><path d="M16 7.6 Q19.4 7.2 20.4 10.2" stroke="#bdbdbd" fill="none" stroke-width="1"/></svg>
<svg style="left:4px;top:615.5px;" width="40" height="26" viewBox="0 0 40 26"><circle cx="12.7" cy="12.4" r="2" fill="#dadada"/><circle cx="18.9" cy="12.4" r="2" fill="#dadada"/><circle cx="25" cy="12.4" r="2" fill="#dadada"/><path d="M32.2 17.8 L32.2 21 L29 21 Z" fill="#a8a8a8"/></svg>
<div style="left:11px;top:650px;width:7px;height:7px;background:#e8e8e8;"></div>
<div style="left:8px;top:647px;width:7px;height:6px;background:#0a0a0a;border:1px solid #d8d8d8;box-sizing:border-box;"></div>
<svg style="left:26px;top:646px;" width="11" height="11" viewBox="0 0 11 11"><path d="M0.5 3.2 L3.4 0.4 L3.4 2.4 L7.8 2.4 L7.8 7.4 L9.8 7.4 L7 10.4 L4.2 7.4 L6.2 7.4 L6.2 4 L3.4 4 L3.4 6 Z" fill="#dadada"/></svg>
<div style="left:19px;top:673px;width:18px;height:18px;background:#ffffff;border:1px solid #2a2a2a;box-sizing:border-box;"></div>
<div style="left:8px;top:662px;width:20px;height:20px;background:#d5678b;border:1px solid #fff;box-sizing:border-box;outline:1px solid #2e2e2e;"></div>
<svg style="left:14px;top:703px;" width="17" height="13" viewBox="0 0 17 13"><rect x=".7" y=".7" width="15.6" height="11.6" stroke="#dadada" fill="none" stroke-width="1.4"/><circle cx="8.5" cy="6.5" r="3.4" stroke="#dadada" fill="none" stroke-width="1.1" stroke-dasharray=".9 1"/></svg>
<svg style="left:14px;top:729px;" width="18" height="14" viewBox="0 0 18 14"><rect x="5.7" y=".7" width="11.6" height="8.6" fill="#535353" stroke="#dadada" stroke-width="1.4"/><rect x=".7" y="3.7" width="11.6" height="9.3" fill="#535353" stroke="#dadada" stroke-width="1.4"/><rect x="6.4" y="4.4" width="5.2" height="4.2" fill="#535353"/><path d="M5.7 4 V9.3 H12" stroke="#dadada" fill="none" stroke-width="1.4"/></svg>
<svg style="left:33px;top:742px;" width="4" height="4" viewBox="0 0 4 4"><path d="M3.4 0 L3.4 3.4 L0 3.4 Z" fill="#a8a8a8"/></svg>
<svg style="left:26px;top:43px;" width="16" height="16" viewBox="0 0 16 16"><path d="M7.5 0.2 L4.8 3.4 L7 3.4 L7 7 L3.4 7 L3.4 4.8 L0.2 7.5 L3.4 10.2 L3.4 8 L7 8 L7 11.6 L4.8 11.6 L7.5 14.8 L10.2 11.6 L8 11.6 L8 8 L11.6 8 L11.6 10.2 L14.8 7.5 L11.6 4.8 L11.6 7 L8 7 L8 3.4 L10.2 3.4 Z" fill="#e2e2e2"/></svg>
<svg style="left:50px;top:48px;" width="8" height="5" viewBox="0 0 8 5"><path d="M0.5 0.5 L4 4 L7.5 0.5" stroke="#b8b8b8" stroke-width="1.1" fill="none"/></svg>
<div style="left:387px;top:43px;width:15px;height:1px;background:#a8a8a8;"></div>
<div style="left:389px;top:45px;width:4px;height:11px;background:#8e8e8e;"></div>
<div style="left:395px;top:45px;width:4px;height:7px;background:#8e8e8e;"></div>
<div style="left:413px;top:49px;width:15px;height:1px;background:#a8a8a8;"></div>
<div style="left:415px;top:44px;width:4px;height:11px;background:#8e8e8e;"></div>
<div style="left:421px;top:46px;width:4px;height:7px;background:#8e8e8e;"></div>
<div style="left:439px;top:55px;width:15px;height:1px;background:#a8a8a8;"></div>
<div style="left:441px;top:42px;width:4px;height:11px;background:#8e8e8e;"></div>
<div style="left:447px;top:46px;width:4px;height:7px;background:#8e8e8e;"></div>
<div style="left:474px;top:41px;width:1px;height:15px;background:#a8a8a8;"></div>
<div style="left:476px;top:44px;width:7px;height:4px;background:#8e8e8e;"></div>
<div style="left:476px;top:50px;width:11px;height:4px;background:#8e8e8e;"></div>
<div style="left:506px;top:41px;width:1px;height:16px;background:#a8a8a8;"></div>
<div style="left:503px;top:44px;width:7px;height:4px;background:#8e8e8e;"></div>
<div style="left:501px;top:50px;width:11px;height:4px;background:#8e8e8e;"></div>
<div style="left:537px;top:41px;width:1px;height:15px;background:#a8a8a8;"></div>
<div style="left:529px;top:44px;width:7px;height:4px;background:#8e8e8e;"></div>
<div style="left:525px;top:50px;width:11px;height:4px;background:#8e8e8e;"></div>
<div style="left:567px;top:43px;width:15px;height:1px;background:#a8a8a8;"></div>
<div style="left:567px;top:49px;width:15px;height:1px;background:#a8a8a8;"></div>
<div style="left:572px;top:44px;width:5px;height:4px;background:#8e8e8e;"></div>
<div style="left:570px;top:50px;width:9px;height:4px;background:#8e8e8e;"></div>
<div style="left:593px;top:45px;width:15px;height:1px;background:#a8a8a8;"></div>
<div style="left:593px;top:52px;width:15px;height:1px;background:#a8a8a8;"></div>
<div style="left:598px;top:43px;width:5px;height:5px;background:#8e8e8e;"></div>
<div style="left:596px;top:50px;width:9px;height:5px;background:#8e8e8e;"></div>
<div style="left:619px;top:47px;width:15px;height:1px;background:#a8a8a8;"></div>
<div style="left:619px;top:54px;width:15px;height:1px;background:#a8a8a8;"></div>
<div style="left:624px;top:43px;width:5px;height:4px;background:#8e8e8e;"></div>
<div style="left:622px;top:50px;width:9px;height:4px;background:#8e8e8e;"></div>
<div style="left:655px;top:41px;width:1px;height:15px;background:#a8a8a8;"></div>
<div style="left:661px;top:41px;width:1px;height:15px;background:#a8a8a8;"></div>
<div style="left:656px;top:44px;width:4px;height:9px;background:#8e8e8e;"></div>
<div style="left:662px;top:46px;width:4px;height:5px;background:#8e8e8e;"></div>
<div style="left:683px;top:41px;width:1px;height:16px;background:#a8a8a8;"></div>
<div style="left:689px;top:41px;width:1px;height:16px;background:#a8a8a8;"></div>
<div style="left:681px;top:44px;width:5px;height:9px;background:#8e8e8e;"></div>
<div style="left:687px;top:46px;width:5px;height:6px;background:#8e8e8e;"></div>
<div style="left:711px;top:41px;width:1px;height:15px;background:#a8a8a8;"></div>
<div style="left:717px;top:41px;width:1px;height:15px;background:#a8a8a8;"></div>
<div style="left:707px;top:44px;width:4px;height:9px;background:#8e8e8e;"></div>
<div style="left:713px;top:46px;width:4px;height:5px;background:#8e8e8e;"></div>
<div style="left:751px;top:42px;width:4px;height:3px;background:#8e8e8e;"></div>
<div style="left:751px;top:47px;width:4px;height:8px;background:#8e8e8e;"></div>
<div style="left:758px;top:42px;width:4px;height:3px;background:#8e8e8e;"></div>
<div style="left:758px;top:47px;width:4px;height:8px;background:#8e8e8e;"></div>
<div style="left:756px;top:41px;width:1px;height:15px;background:#a8a8a8;"></div>
<svg style="left:847px;top:41px;" width="20" height="16" viewBox="0 0 20 16"><circle cx="11.5" cy="5" r="3.6" stroke="#8a8a8a" fill="none" stroke-width="1.2"/><ellipse cx="8" cy="7.5" rx="6" ry="3.6" transform="rotate(20 8 7.5)" stroke="#8a8a8a" fill="none" stroke-width="1.2"/><path d="M10 12.4 Q16 14.6 18.6 11 Q19 8.6 15.6 7.6" stroke="#8a8a8a" fill="none" stroke-width="1.1"/><path d="M4.6 14.6 L7.6 11.2 L9.6 14.8 Z" fill="#8a8a8a"/></svg>
<svg style="left:873px;top:40px;" width="19" height="18" viewBox="0 0 19 18"><circle cx="9.5" cy="9.4" r="7.6" stroke="#8a8a8a" fill="none" stroke-width="1.2"/><circle cx="9.8" cy="9.2" r="3.6" stroke="#8a8a8a" fill="none" stroke-width="1.2"/><path d="M1 3.4 L5.6 1.6 L4.8 6 Z" fill="#8a8a8a"/></svg>
<svg style="left:899px;top:40px;" width="18" height="18" viewBox="0 0 18 18"><path d="M9 0.6 L5.8 4.4 L7.8 4.4 L7.8 7.8 L4.4 7.8 L4.4 5.8 L0.6 9 L4.4 12.2 L4.4 10.2 L7.8 10.2 L7.8 13.6 L5.8 13.6 L9 17.4 L12.2 13.6 L10.2 13.6 L10.2 10.2 L13.6 10.2 L13.6 12.2 L17.4 9 L13.6 5.8 L13.6 7.8 L10.2 7.8 L10.2 4.4 L12.2 4.4 Z" stroke="#8a8a8a" fill="none" stroke-width="1"/></svg>
<svg style="left:925px;top:40px;" width="19" height="18" viewBox="0 0 19 18"><path d="M9.5 0.4 L6.8 3.8 L12.2 3.8 Z M9.5 17.6 L6.8 14.2 L12.2 14.2 Z M0.4 8 L4 5.4 L4 10.6 Z M18.6 8 L15 5.4 L15 10.6 Z" fill="#8a8a8a"/><path d="M9.5 3.8 V5.6 M9.5 12.4 V14.2 M4 8 H6 M13 8 H15" stroke="#8a8a8a" stroke-width="1.4"/><circle cx="9.5" cy="8.6" r="3" stroke="#8a8a8a" fill="none" stroke-width="1.2"/></svg>
<svg style="left:951px;top:41px;" width="20" height="16" viewBox="0 0 20 16"><rect x="0.5" y="4" width="9.5" height="8" rx="1" fill="#8a8a8a"/><path d="M10 8 L13.6 4.6 L13.6 11.4 Z" fill="#8a8a8a"/><path d="M19 2.6 L15.2 8 L19 13.4" stroke="#8a8a8a" fill="none" stroke-width="1.1"/></svg>
<svg style="left:1840px;top:41px;" width="17" height="17" viewBox="0 0 17 17"><circle cx="10" cy="6.6" r="5.2" stroke="#dcdcdc" fill="none" stroke-width="1.5"/><path d="M6.2 10.6 L1.2 15.6" stroke="#dcdcdc" stroke-width="2" stroke-linecap="round"/></svg>
<svg style="left:1874px;top:43px;" width="17" height="13" viewBox="0 0 17 13"><rect x=".7" y=".7" width="15" height="11.6" stroke="#e0e0e0" fill="none" stroke-width="1.4"/><path d="M.7 2 H15.7" stroke="#e0e0e0" stroke-width="1.4"/><rect x="2.6" y="3.8" width="2.2" height="1.6" fill="#e0e0e0"/><rect x="2.6" y="6.2" width="2.2" height="1.6" fill="#e0e0e0"/><rect x="2.6" y="8.6" width="2.2" height="1.6" fill="#e0e0e0"/></svg>
<svg style="left:1899px;top:48px;" width="10" height="6" viewBox="0 0 10 6"><path d="M0.8 0.6 L4.6 4.4 L8.4 0.6" stroke="#c4c4c4" stroke-width="1.2" fill="none"/></svg>
<svg style="left:1508px;top:93px;" width="18" height="20" viewBox="0 0 18 20"><rect x="1.5" y="1.8" width="4.4" height="4.2" stroke="#dcdcdc" fill="none" stroke-width="1.1"/><rect x="1.5" y="7.8" width="4.4" height="4.2" stroke="#dcdcdc" fill="none" stroke-width="1.1"/><rect x="1" y="13.2" width="5.4" height="5" fill="#dcdcdc"/><path d="M9.6 17 Q16.4 13 13.6 5.4" stroke="#dcdcdc" fill="none" stroke-width="2"/><path d="M8.4 6.2 L14.4 1.6 L16 8.2 Z" fill="#dcdcdc"/></svg>
<svg style="left:1505px;top:133px;" width="23" height="22" viewBox="0 0 23 22"><path d="M2 2.2 H9.4 V13 H2 Z M13 9.4 H20.2 V19.6 H13 Z" stroke="#dcdcdc" fill="none" stroke-width="1.3"/><path d="M2 2.2 L13 19.6 M9.4 2.2 L20.2 9.4 M9.4 13 L13 19.6 M13 9.4 L17 16 M4.6 4.4 L9.4 11.4" stroke="#dcdcdc" fill="none" stroke-width="1.1"/><path d="M11.6 20.4 H21.6" stroke="#dcdcdc" stroke-width="1.2"/></svg>
<span style="left:1508.6px;top:176.46px;font-size:16px;line-height:16px;color:#e2e2e2;">A</span>
<div style="left:1522.6px;top:178px;width:1.2px;height:15px;background:#dedede;"></div>
<span style="left:1509.8px;top:199.72px;font-size:19px;line-height:19px;color:#e2e2e2;font-weight:bold;">¶</span>
<svg style="left:1829px;top:94px;" width="23" height="17" viewBox="0 0 23 17"><g><circle cx="7.6" cy="10" r="6.5" fill="#dedede"/><circle cx="14.8" cy="8" r="7.5" fill="#dedede"/><rect x="7.6" y="11" width="8" height="5.5" fill="#dedede"/><circle cx="7.6" cy="10" r="5" fill="#4c4c4c"/><circle cx="14.8" cy="8" r="6" fill="#4c4c4c"/><rect x="7.6" y="10" width="7" height="5" fill="#4c4c4c"/><circle cx="7.6" cy="10" r="4" fill="#c4c4c4"/><circle cx="14.8" cy="8" r="5" fill="#c4c4c4"/><rect x="7.6" y="9" width="7" height="5" fill="#c4c4c4"/><path d="M6.4 8.6 Q10.6 13.8 15.2 13.4 M9.6 5.2 Q12 5.8 13.6 8" stroke="#4c4c4c" stroke-width="1.1" fill="none"/></g></svg>
<svg style="left:1750px;top:348px;" width="11" height="11" viewBox="0 0 11 11"><path d="M0.7 0.7 H9.9 V9.9 H4.6 L0.7 6 Z" fill="#3a3a3a" stroke="#f0f0f0" stroke-width="1.3"/><path d="M0.7 6 H4.6 V9.9 Z" fill="#f0f0f0"/></svg>
<svg style="left:1778px;top:347px;" width="12" height="13" viewBox="0 0 12 13"><path d="M0 2.8 H11.4" stroke="#a0a0a0" stroke-width="1.2"/><path d="M3.6 2.6 Q3.6 0.6 5.7 0.6 Q7.8 0.6 7.8 2.6" stroke="#a0a0a0" fill="none" stroke-width="1.1"/><path d="M1.5 3 V12 H9.9 V3" stroke="#a0a0a0" fill="none" stroke-width="1.2"/><path d="M3.7 4.4 V10.6 M5.7 4.4 V10.6 M7.7 4.4 V10.6" stroke="#a0a0a0" stroke-width="1.1"/></svg>
<svg style="left:1552px;top:406px;" width="12" height="15" viewBox="0 0 12 15"><path d="M0.7 0.7 H7.6 L10.8 4 V13.8 H0.7 Z" stroke="#e4e4e4" fill="none" stroke-width="1.3"/><path d="M7.4 0.8 V4.2 H10.8" stroke="#e4e4e4" fill="none" stroke-width="1.1"/></svg>
<svg style="left:1548px;top:696px;" width="11" height="11" viewBox="0 0 11 11"><circle cx="6.6" cy="4.2" r="3.3" stroke="#9a9a9a" fill="none" stroke-width="1.3"/><path d="M4.2 6.6 L0.8 10" stroke="#9a9a9a" stroke-width="1.6" stroke-linecap="round"/></svg>
<svg style="left:1640px;top:696px;" width="13" height="11" viewBox="0 0 13 11"><rect x=".6" y=".6" width="11.4" height="9.2" stroke="#a6a6a6" fill="none" stroke-width="1.1"/><path d="M2 8 L4.6 4.4 L6.4 6.6 L8 5.2 L10.4 8 Z" fill="#a6a6a6"/></svg>
<svg style="left:1665px;top:696px;" width="12" height="12" viewBox="0 0 12 12"><circle cx="5.7" cy="5.8" r="5" stroke="#a6a6a6" fill="none" stroke-width="1.2"/><path d="M9.2 2.2 A5 5 0 0 1 2.2 9.4 Z" fill="#a6a6a6"/></svg>
<svg style="left:1689px;top:697px;" width="12" height="10" viewBox="0 0 12 10"><path d="M0.4 0.2 H10.6 V3.4 H9.8 C9.6 2 9 1.6 7.2 1.6 V7.6 C7.2 8.4 7.6 8.6 8.8 8.7 V9.4 H2.2 V8.7 C3.4 8.6 3.8 8.4 3.8 7.6 V1.6 C2 1.6 1.4 2 1.2 3.4 H0.4 Z" fill="#a6a6a6"/></svg>
<svg style="left:1712px;top:696px;" width="13" height="12" viewBox="0 0 13 12"><rect x="2" y="2" width="8.4" height="7.8" stroke="#a6a6a6" fill="none" stroke-width="1.1"/><rect x=".6" y=".6" width="2.6" height="2.6" fill="#535353" stroke="#a6a6a6" stroke-width=".9"/><rect x="9.2" y=".6" width="2.6" height="2.6" fill="#535353" stroke="#a6a6a6" stroke-width=".9"/><rect x=".6" y="8.6" width="2.6" height="2.6" fill="#535353" stroke="#a6a6a6" stroke-width=".9"/><rect x="9.2" y="8.6" width="2.6" height="2.6" fill="#535353" stroke="#a6a6a6" stroke-width=".9"/></svg>
<svg style="left:1737px;top:696px;" width="12" height="13" viewBox="0 0 12 13"><path d="M3.6 0.6 H8 L10.6 3.2 V9.6 H3.6 Z" stroke="#a6a6a6" fill="none" stroke-width="1.1"/><path d="M8 0.6 V3.2 H10.6" stroke="#a6a6a6" fill="none" stroke-width="1"/><rect x=".6" y="6" width="5.6" height="5.8" fill="#a6a6a6"/></svg>
<div style="left:1762px;top:698px;width:8px;height:12px;background:#464646;border-radius:4px;"></div>
<div style="left:1762px;top:696px;width:8px;height:8px;background:#8c8c8c;border-radius:4px;"></div>
<svg style="left:1574px;top:750px;" width="13" height="12" viewBox="0 0 13 12"><rect x=".6" y=".6" width="11" height="10.6" stroke="#a8a8a8" fill="none" stroke-width="1.1"/><rect x="1" y="1" width="3.4" height="3.4" fill="#a8a8a8"/><rect x="7.8" y="1" width="3.4" height="3.4" fill="#a8a8a8"/><rect x="4.4" y="4.4" width="3.4" height="3.4" fill="#a8a8a8"/><rect x="1" y="7.6" width="3.4" height="3.4" fill="#a8a8a8"/><rect x="7.8" y="7.6" width="3.4" height="3.4" fill="#a8a8a8"/></svg>
<svg style="left:1595px;top:749px;" width="15" height="15" viewBox="0 0 15 15"><path d="M13 0.4 L13.8 1.2 L7.6 9.4 L5.8 8 Z" fill="#a8a8a8"/><path d="M5 8.8 L6.8 10.4 C6.6 13 3.8 14 0.6 13.8 C2.4 13 2 9.4 5 8.8 Z" fill="#a8a8a8"/></svg>
<svg style="left:1617px;top:749px;" width="15" height="15" viewBox="0 0 15 15"><path d="M7.3 0.6 L4.8 3.6 L6.7 3.6 L6.7 6.6 L3.6 6.6 L3.6 4.8 L0.6 7.2 L3.6 9.6 L3.6 7.8 L6.7 7.8 L6.7 10.8 L4.8 10.8 L7.3 13.8 L9.8 10.8 L7.9 10.8 L7.9 7.8 L11 7.8 L11 9.6 L14 7.2 L11 4.8 L11 6.6 L7.9 6.6 L7.9 3.6 L9.8 3.6 Z" fill="#a8a8a8"/></svg>
<svg style="left:1640px;top:749px;" width="15" height="14" viewBox="0 0 15 14"><path d="M3 0 V13 M0 3 H8.6 L12 6.2 V13.4 M0 10.4 H14.6 M8.4 3 V6.4 H12" stroke="#a8a8a8" fill="none" stroke-width="1.1"/><path d="M12 0 V2.6" stroke="#a8a8a8" stroke-width="1" stroke-dasharray="1 1"/></svg>
<svg style="left:1663px;top:750px;" width="12" height="13" viewBox="0 0 12 13"><path d="M3 5.4 V3.6 Q3 0.8 5.5 0.8 Q8 0.8 8 3.6 V5.4" stroke="#a8a8a8" fill="none" stroke-width="1.5"/><rect x=".6" y="5.2" width="9.8" height="7" rx=".8" fill="#a8a8a8"/><rect x="4.7" y="7.4" width="1.6" height="2.4" fill="#535353"/></svg>
<svg style="left:1545px;top:780px;" width="14" height="11" viewBox="0 0 14 11"><path d="M0.3 5.4 Q6.8 -3.2 13.5 5.4 Q6.8 14 0.3 5.4 Z" fill="#f2f2f2"/><circle cx="6.9" cy="5" r="2.7" fill="#4f4f4f"/><circle cx="6" cy="4" r=".9" fill="#f2f2f2"/></svg>
<svg style="left:1774px;top:779px;" width="12" height="14" viewBox="0 0 12 14"><path d="M3.2 6 V3.8 Q3.2 1 5.8 1 Q8.4 1 8.4 3.8 V6" stroke="#f0f0f0" fill="none" stroke-width="1.3"/><rect x="1" y="6" width="9.8" height="7" stroke="#f0f0f0" fill="none" stroke-width="1.3"/><rect x="5" y="8.4" width="1.8" height="2.2" fill="#f0f0f0"/></svg>
<svg style="left:1614px;top:1017px;" width="16" height="11" viewBox="0 0 16 11"><rect x=".7" y="1.7" width="8" height="7" rx="3.5" stroke="#a6a6a6" fill="none" stroke-width="1.4"/><rect x="6.3" y="1.7" width="8" height="7" rx="3.5" stroke="#a6a6a6" fill="none" stroke-width="1.4"/><path d="M4 5.2 H11" stroke="#a6a6a6" stroke-width="1.4"/></svg>
<span style="left:1643.5px;top:1015.01px;font-size:14.75px;line-height:14.75px;color:#a6a6a6;font-style:italic;letter-spacing:0.014px;">fx</span>
<div style="left:1669px;top:1017px;width:13px;height:11px;background:#e6e6e6;"></div>
<div style="left:1672.5px;top:1019.5px;width:6px;height:6px;background:#4a4a4a;border-radius:3px;"></div>
<svg style="left:1697px;top:1017px;" width="13" height="13" viewBox="0 0 13 13"><circle cx="6.2" cy="6.2" r="5.4" stroke="#e6e6e6" fill="none" stroke-width="1.3"/><path d="M10 2.4 A5.4 5.4 0 0 1 2.4 10 Z" fill="#e6e6e6"/></svg>
<svg style="left:1711px;top:1029px;" width="5" height="3" viewBox="0 0 5 3"><path d="M0 0 H4.4 L2.2 2.6 Z" fill="#e6e6e6"/></svg>
<svg style="left:1723px;top:1016px;" width="14" height="12" viewBox="0 0 14 12"><path d="M0.4 0.8 H5.4 L6.6 2.4 H13 V11.4 H0.4 Z" fill="#e0e0e0"/><path d="M0.4 3 H13" stroke="#535353" stroke-width=".8"/></svg>
<svg style="left:1751.5px;top:1018px;" width="11" height="11" viewBox="0 0 11 11"><path d="M0.7 0.7 H9.9 V9.9 H4.6 L0.7 6 Z" fill="#3a3a3a" stroke="#f0f0f0" stroke-width="1.3"/><path d="M0.7 6 H4.6 V9.9 Z" fill="#f0f0f0"/></svg>
<svg style="left:1778px;top:1017px;" width="12" height="13" viewBox="0 0 12 13"><path d="M0 2.8 H11.4" stroke="#a0a0a0" stroke-width="1.2"/><path d="M3.6 2.6 Q3.6 0.6 5.7 0.6 Q7.8 0.6 7.8 2.6" stroke="#a0a0a0" fill="none" stroke-width="1.1"/><path d="M1.5 3 V12 H9.9 V3" stroke="#a0a0a0" fill="none" stroke-width="1.2"/><path d="M3.7 4.4 V10.6 M5.7 4.4 V10.6 M7.7 4.4 V10.6" stroke="#a0a0a0" stroke-width="1.1"/></svg>
</body></html>
